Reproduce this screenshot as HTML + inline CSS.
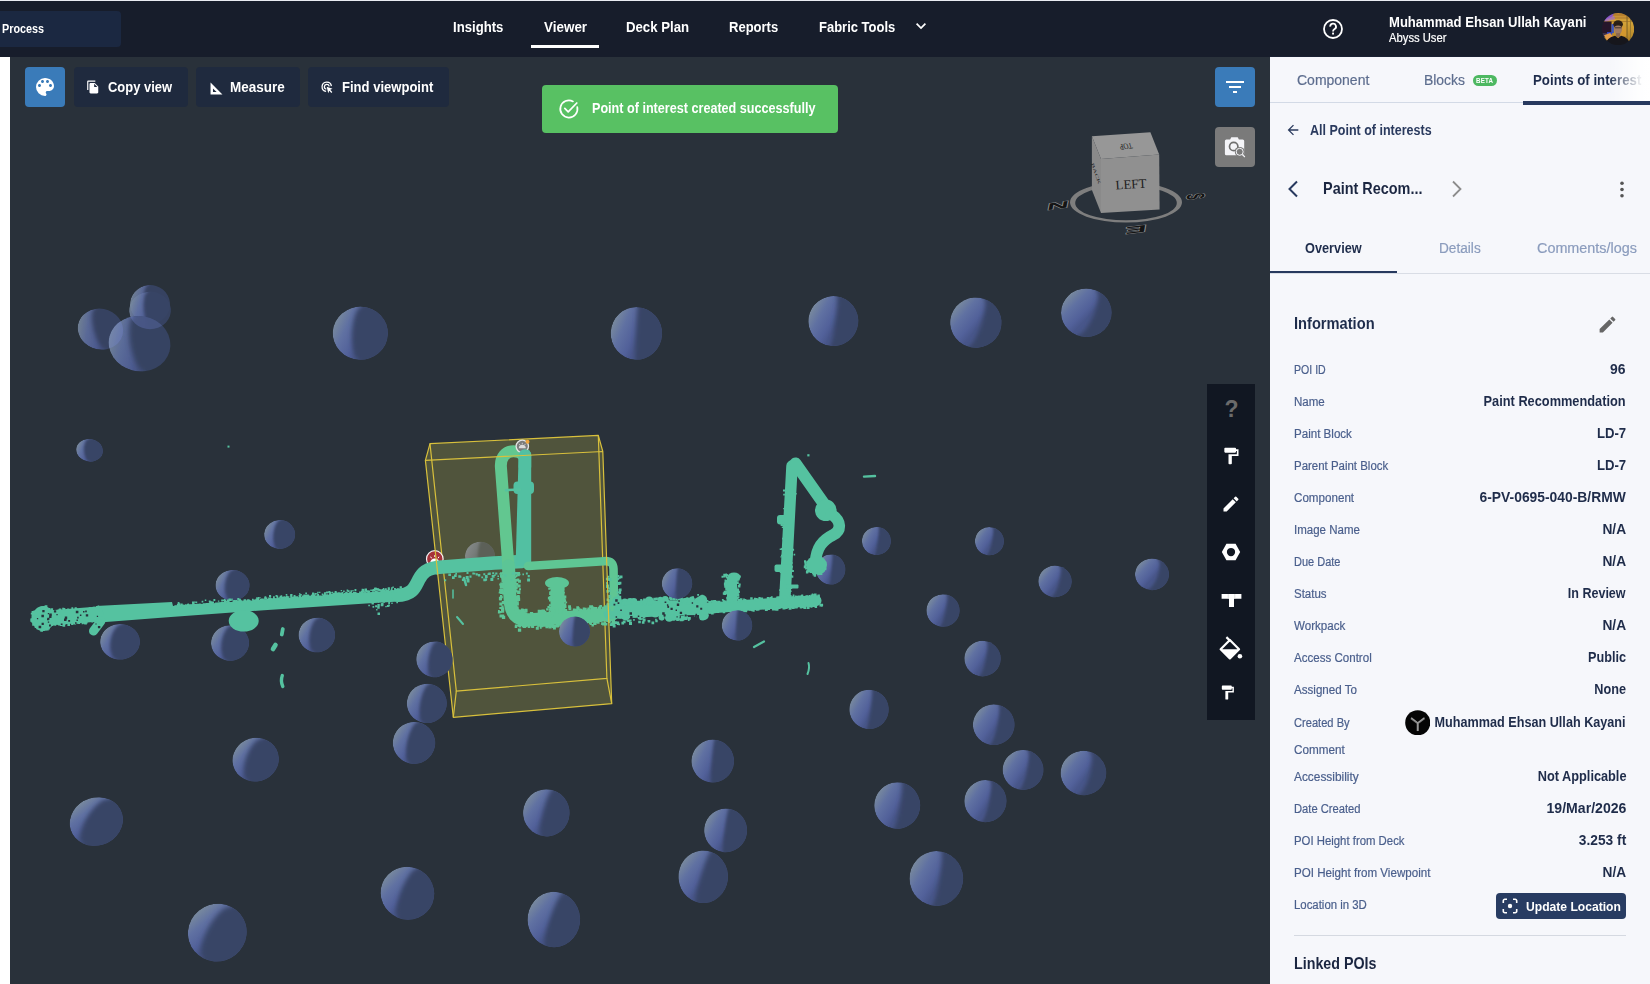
<!DOCTYPE html>
<html lang="en">
<head>
<meta charset="utf-8">
<title>Viewer - Point of interest</title>
<style>
*{box-sizing:border-box;margin:0;padding:0}
html,body{width:1650px;height:984px;overflow:hidden;background:#fff}
body{position:relative;font-family:"Liberation Sans",sans-serif;color:#fff;-webkit-font-smoothing:antialiased}
.abs{position:absolute}
.t{position:absolute;white-space:nowrap;line-height:1}
#topbar{left:0;top:0;width:1650px;height:57px;background:#171d2b;border-top:1px solid #e9ecf2}
#proc{left:0;top:11px;width:121px;height:36px;background:#1b2841;border-radius:0 4px 4px 0}
#viewer{left:10px;top:57px;width:1260px;height:927px;background:#29313a;overflow:hidden}
#panel{left:1270px;top:56px;width:380px;height:928px;background:#f6f7fb;border-top:1px solid #1a2133}
.btn{position:absolute;top:67px;height:40px;background:#1f2a3e;border-radius:4px}
.nav{font-weight:bold;font-size:15px;color:#fff;top:19px}
.lab{font-size:12px;color:#4a5f8c;left:1294px;-webkit-text-stroke:.2px #4a5f8c}
.val{font-size:14px;font-weight:bold;color:#1f2c4a;right:24px;text-align:right}
</style>
</head>
<body>
<div class="abs" id="topbar"></div>
<div class="abs" id="proc"></div>
<div class="t" id="t_proc" style="left:2px;top:22px;font-size:13px;font-weight:bold;color:#fff;left:2.4px;transform-origin:0 0;transform:scaleX(0.8321)">Process</div>
<div class="t nav" id="t_ins" style="left:453px;left:453.0px;transform-origin:0 0;transform:scaleX(0.8763)">Insights</div>
<div class="t nav" id="t_view" style="left:543px;left:543.5px;transform-origin:0 0;transform:scaleX(0.8962)">Viewer</div>
<div class="abs" style="left:531px;top:45px;width:68px;height:3px;background:#fff"></div>
<div class="t nav" id="t_deck" style="left:626px;left:626.3px;transform-origin:0 0;transform:scaleX(0.8798)">Deck Plan</div>
<div class="t nav" id="t_rep" style="left:729px;left:729.4px;transform-origin:0 0;transform:scaleX(0.8679)">Reports</div>
<div class="t nav" id="t_fab" style="left:819px;left:818.6px;transform-origin:0 0;transform:scaleX(0.8663)">Fabric Tools</div>
<svg class="abs" style="left:914px;top:19px" width="14" height="14" viewBox="0 0 14 14"><path d="M2.6 4.6 L7 9 L11.4 4.6" fill="none" stroke="#fff" stroke-width="1.7"/></svg>
<svg class="abs" style="left:1321px;top:17px" width="24" height="24" viewBox="0 0 24 24"><circle cx="12" cy="12" r="9" fill="none" stroke="#fff" stroke-width="1.8"/><path d="M9.2 9.6 a2.9 2.9 0 1 1 4.4 2.4 c-1 .7 -1.6 1.2 -1.6 2.4" fill="none" stroke="#fff" stroke-width="1.8"/><rect x="11.1" y="15.6" width="1.9" height="1.9" fill="#fff"/></svg>
<div class="t" id="t_user" style="left:1388px;top:15px;font-size:14px;font-weight:bold;color:#fff;left:1388.5px;transform-origin:0 0;transform:scaleX(0.9333)">Muhammad Ehsan Ullah Kayani</div>
<div class="t" id="t_abyss" style="-webkit-text-stroke:.2px;left:1388px;top:32px;font-size:12px;color:#fff;left:1388.5px;transform-origin:0 0;transform:scaleX(0.9371)">Abyss User</div>
<svg class="abs" style="left:1602px;top:12.800px" width="32.200" height="32.200" viewBox="0 0 32 32">
<defs><clipPath id="avc"><circle cx="16" cy="16" r="16"/></clipPath><filter id="avb" x="-10%" y="-10%" width="120%" height="120%"><feGaussianBlur stdDeviation="0.55"/></filter>
<linearGradient id="avg" x1="0" y1="0" x2="0" y2="1"><stop offset="0" stop-color="#b8782c"/><stop offset=".3" stop-color="#d6a63a"/><stop offset=".7" stop-color="#b98a2a"/><stop offset="1" stop-color="#7a5a20"/></linearGradient></defs>
<g clip-path="url(#avc)"><g filter="url(#avb)"><rect x="-3" y="-3" width="38" height="38" fill="url(#avg)"/><path d="M-3 5h38M-3 8.500h38M-3 2h38" stroke="#8a5a20" stroke-width=".9" opacity=".55"/>
<path d="M0 0h12l-2 4-8 4H0z" fill="#8a55c8"/><path d="M3 6l9-3 1 3-10 3z" fill="#a070d0" opacity=".7"/>
<rect x="0" y="8.500" width="9.500" height="12" fill="#25142a"/><rect x="0" y="20" width="10" height="4" fill="#3a3050"/>
<rect x="9.500" y="11" width="2.300" height="9" fill="#3a55c0"/><rect x="5" y="19" width="5" height="3" fill="#3048c8"/>
<path d="M2 22l6-2 3 3-6 4z" fill="#e09a48"/>
<rect x="24.300" y="3" width="1.200" height="26" fill="#8a6a28"/><rect x="27.800" y="6" width="1" height="22" fill="#9a7a30"/>
<rect x="18" y="14" width="6" height="9" fill="#d89a30" opacity=".8"/>
<ellipse cx="16" cy="11.300" rx="4.800" ry="4.200" fill="#2c2016"/>
<ellipse cx="16" cy="16.200" rx="3.900" ry="5.300" fill="#a07c62"/>
<path d="M12.300 13.600q3.700-2.400 7.400 0l0-2q-3.700-2.600-7.400 0z" fill="#2c2016"/>
<path d="M12.600 14.700h6.800" stroke="#4a3a34" stroke-width="1.100"/>
<rect x="14" y="20" width="4" height="4" fill="#8a6850"/>
<path d="M3 32q1.500-8 10-9.500l3 2.500 3-2.500q8 1.500 9 9.500z" fill="#17131a"/></g></g></svg>

<div class="abs" id="viewer"></div>
<svg class="abs" style="left:0;top:0" width="1650" height="984" viewBox="0 0 1650 984">
<defs>
<clipPath id="vclip"><rect x="10" y="56" width="1260" height="928"/></clipPath>
<clipPath id="uc"><circle r="1"/></clipPath>
<filter id="sb" x="-20%" y="-20%" width="140%" height="140%"><feGaussianBlur stdDeviation="0.085"/></filter>
<linearGradient id="lit" gradientUnits="userSpaceOnUse" x1="-1" y1="-0.35" x2="0.15" y2="0.1"><stop offset="0" stop-color="#7b8c9d"/><stop offset=".4" stop-color="#6071a2"/><stop offset=".78" stop-color="#52619a"/><stop offset="1" stop-color="#48568a"/></linearGradient>
<linearGradient id="litg" gradientUnits="userSpaceOnUse" x1="-1" y1="-0.35" x2="0.15" y2="0.1"><stop offset="0" stop-color="#868b8a"/><stop offset=".5" stop-color="#777c7a"/><stop offset="1" stop-color="#686c66"/></linearGradient>
<linearGradient id="sgg" x1="0" y1="0.3" x2="1" y2="0.7"><stop offset="0" stop-color="#7a7f80"/><stop offset=".4" stop-color="#6a6e6c"/><stop offset=".55" stop-color="#555a52"/><stop offset="1" stop-color="#54584c"/></linearGradient>
<linearGradient id="pg" gradientUnits="userSpaceOnUse" x1="495" y1="0" x2="530" y2="0"><stop offset="0" stop-color="#63c88f"/><stop offset="1" stop-color="#52c0a2"/></linearGradient>
</defs>
<g clip-path="url(#vclip)">
<g id="spheres_back">
<g transform="translate(100.4 329.2) rotate(15) scale(22.9 20.4) rotate(-27)" clip-path="url(#uc)" opacity="0.9"><circle r="1" fill="url(#lit)"/><path d="M0-1.6H1.6V1.6H0V1A0.300 1 0 0 1 0-1Z" fill="#394566" filter="url(#sb)"/></g>
<g transform="translate(150 304.3) scale(20 19.3) rotate(-5)" clip-path="url(#uc)" opacity="0.9"><circle r="1" fill="url(#lit)"/><path d="M0-1.6H1.6V1.6H0V1A0.300 1 0 0 1 0-1Z" fill="#394566" filter="url(#sb)"/></g>
<g transform="translate(150 310.4) scale(20.9 18.8) rotate(-5)" clip-path="url(#uc)" opacity="0.9"><circle r="1" fill="url(#lit)"/><path d="M0-1.6H1.6V1.6H0V1A0.300 1 0 0 1 0-1Z" fill="#394566" filter="url(#sb)"/></g>
<g transform="translate(139.5 343.7) rotate(10) scale(31 27.7) rotate(-18)" clip-path="url(#uc)" opacity="0.92"><circle r="1" fill="url(#lit)"/><path d="M0-1.6H1.6V1.6H0V1A0.300 1 0 0 1 0-1Z" fill="#394566" filter="url(#sb)"/></g>
<g transform="translate(360.3 333.2) scale(27.6 26.6) rotate(3)" clip-path="url(#uc)"><circle r="1" fill="url(#lit)"/><path d="M0-1.6H1.6V1.6H0V1A0.300 1 0 0 1 0-1Z" fill="#394566" filter="url(#sb)"/></g>
<g transform="translate(636.4 333.4) scale(25.7 26.3) rotate(3)" clip-path="url(#uc)"><circle r="1" fill="url(#lit)"/><path d="M0-1.6H1.6V1.6H0V1A0.020 1 0 0 1 0-1Z" fill="#394566" filter="url(#sb)"/></g>
<g transform="translate(833.3 321.1) scale(25 25) rotate(8)" clip-path="url(#uc)"><circle r="1" fill="url(#lit)"/><path d="M0-1.6H1.6V1.6H0V1A0.080 1 0 0 0 0-1Z" fill="#394566" filter="url(#sb)"/></g>
<g transform="translate(975.8 322.6) scale(25.7 25.2) rotate(18)" clip-path="url(#uc)"><circle r="1" fill="url(#lit)"/><path d="M0-1.6H1.6V1.6H0V1A0.220 1 0 0 0 0-1Z" fill="#394566" filter="url(#sb)"/></g>
<g transform="translate(1086.3 312.7) scale(25.3 24.3) rotate(22)" clip-path="url(#uc)"><circle r="1" fill="url(#lit)"/><path d="M0-1.6H1.6V1.6H0V1A0.300 1 0 0 0 0-1Z" fill="#394566" filter="url(#sb)"/></g>
<g transform="translate(89.5 450.3) rotate(10) scale(13.4 11.3) rotate(-10)" clip-path="url(#uc)"><circle r="1" fill="url(#lit)"/><path d="M0-1.6H1.6V1.6H0V1A0.420 1 0 0 1 0-1Z" fill="#394566" filter="url(#sb)"/></g>
<g transform="translate(279.6 534.5) scale(15.5 14.5) rotate(5)" clip-path="url(#uc)"><circle r="1" fill="url(#lit)"/><path d="M0-1.6H1.6V1.6H0V1A0.400 1 0 0 1 0-1Z" fill="#394566" filter="url(#sb)"/></g>
<g transform="translate(232.5 585.3) scale(17 15.3) rotate(5)" clip-path="url(#uc)"><circle r="1" fill="url(#lit)"/><path d="M0-1.6H1.6V1.6H0V1A0.450 1 0 0 1 0-1Z" fill="#394566" filter="url(#sb)"/></g>
<g transform="translate(120 641.8) scale(19.9 17.8) rotate(8)" clip-path="url(#uc)"><circle r="1" fill="url(#lit)"/><path d="M0-1.6H1.6V1.6H0V1A0.480 1 0 0 1 0-1Z" fill="#394566" filter="url(#sb)"/></g>
<g transform="translate(230 643) scale(19 17.8) rotate(8)" clip-path="url(#uc)"><circle r="1" fill="url(#lit)"/><path d="M0-1.6H1.6V1.6H0V1A0.450 1 0 0 1 0-1Z" fill="#394566" filter="url(#sb)"/></g>
<g transform="translate(316.8 635) scale(18.3 17.3) rotate(8)" clip-path="url(#uc)"><circle r="1" fill="url(#lit)"/><path d="M0-1.6H1.6V1.6H0V1A0.400 1 0 0 1 0-1Z" fill="#394566" filter="url(#sb)"/></g>
<g transform="translate(426.8 703.4) scale(20 19.7) rotate(10)" clip-path="url(#uc)"><circle r="1" fill="url(#lit)"/><path d="M0-1.6H1.6V1.6H0V1A0.330 1 0 0 1 0-1Z" fill="#394566" filter="url(#sb)"/></g>
<g transform="translate(414 742.9) scale(21.2 21) rotate(12)" clip-path="url(#uc)"><circle r="1" fill="url(#lit)"/><path d="M0-1.6H1.6V1.6H0V1A0.330 1 0 0 1 0-1Z" fill="#394566" filter="url(#sb)"/></g>
<g transform="translate(255.6 759.6) rotate(-15) scale(23.3 21.8) rotate(33)" clip-path="url(#uc)"><circle r="1" fill="url(#lit)"/><path d="M0-1.6H1.6V1.6H0V1A0.420 1 0 0 1 0-1Z" fill="#394566" filter="url(#sb)"/></g>
<g transform="translate(96.3 821.5) rotate(-20) scale(27 24) rotate(48)" clip-path="url(#uc)"><circle r="1" fill="url(#lit)"/><path d="M0-1.6H1.6V1.6H0V1A0.400 1 0 0 1 0-1Z" fill="#394566" filter="url(#sb)"/></g>
<g transform="translate(407.4 893.2) rotate(-60) scale(26.3 27) rotate(82)" clip-path="url(#uc)"><circle r="1" fill="url(#lit)"/><path d="M0-1.6H1.6V1.6H0V1A0.250 1 0 0 1 0-1Z" fill="#394566" filter="url(#sb)"/></g>
<g transform="translate(217.3 932.6) rotate(-30) scale(29.6 28.7) rotate(58)" clip-path="url(#uc)"><circle r="1" fill="url(#lit)"/><path d="M0-1.6H1.6V1.6H0V1A0.350 1 0 0 1 0-1Z" fill="#394566" filter="url(#sb)"/></g>
<g transform="translate(869 709.4) scale(19.7 19.7) rotate(8)" clip-path="url(#uc)"><circle r="1" fill="url(#lit)"/><path d="M0-1.6H1.6V1.6H0V1A0.080 1 0 0 0 0-1Z" fill="#394566" filter="url(#sb)"/></g>
<g transform="translate(712.7 761.1) scale(21.3 21.5) rotate(5)" clip-path="url(#uc)"><circle r="1" fill="url(#lit)"/><path d="M0-1.6H1.6V1.6H0V1A0.050 1 0 0 1 0-1Z" fill="#394566" filter="url(#sb)"/></g>
<g transform="translate(546.3 812.8) scale(23.3 23.6) rotate(15)" clip-path="url(#uc)"><circle r="1" fill="url(#lit)"/><path d="M0-1.6H1.6V1.6H0V1A0.150 1 0 0 1 0-1Z" fill="#394566" filter="url(#sb)"/></g>
<g transform="translate(725.6 830.4) scale(21.5 21.8) rotate(8)" clip-path="url(#uc)"><circle r="1" fill="url(#lit)"/><path d="M0-1.6H1.6V1.6H0V1A0.050 1 0 0 1 0-1Z" fill="#394566" filter="url(#sb)"/></g>
<g transform="translate(703.2 876.7) scale(24.8 26.3) rotate(18)" clip-path="url(#uc)"><circle r="1" fill="url(#lit)"/><path d="M0-1.6H1.6V1.6H0V1A0.100 1 0 0 1 0-1Z" fill="#394566" filter="url(#sb)"/></g>
<g transform="translate(553.8 919.5) scale(26.3 27.8) rotate(20)" clip-path="url(#uc)"><circle r="1" fill="url(#lit)"/><path d="M0-1.6H1.6V1.6H0V1A0.150 1 0 0 1 0-1Z" fill="#394566" filter="url(#sb)"/></g>
<g transform="translate(897.2 805.5) scale(23 23.3) rotate(10)" clip-path="url(#uc)"><circle r="1" fill="url(#lit)"/><path d="M0-1.6H1.6V1.6H0V1A0.120 1 0 0 0 0-1Z" fill="#394566" filter="url(#sb)"/></g>
<g transform="translate(936.3 878.5) scale(26.8 27.4) rotate(10)" clip-path="url(#uc)"><circle r="1" fill="url(#lit)"/><path d="M0-1.6H1.6V1.6H0V1A0.120 1 0 0 0 0-1Z" fill="#394566" filter="url(#sb)"/></g>
<g transform="translate(985.4 801.1) scale(21.1 21.1) rotate(12)" clip-path="url(#uc)"><circle r="1" fill="url(#lit)"/><path d="M0-1.6H1.6V1.6H0V1A0.180 1 0 0 0 0-1Z" fill="#394566" filter="url(#sb)"/></g>
<g transform="translate(1023 769.9) scale(20.4 20) rotate(12)" clip-path="url(#uc)"><circle r="1" fill="url(#lit)"/><path d="M0-1.6H1.6V1.6H0V1A0.200 1 0 0 0 0-1Z" fill="#394566" filter="url(#sb)"/></g>
<g transform="translate(1083.4 773) scale(22.8 22.2) rotate(15)" clip-path="url(#uc)"><circle r="1" fill="url(#lit)"/><path d="M0-1.6H1.6V1.6H0V1A0.280 1 0 0 0 0-1Z" fill="#394566" filter="url(#sb)"/></g>
<g transform="translate(993.7 724.7) scale(20.8 20.4) rotate(12)" clip-path="url(#uc)"><circle r="1" fill="url(#lit)"/><path d="M0-1.6H1.6V1.6H0V1A0.180 1 0 0 0 0-1Z" fill="#394566" filter="url(#sb)"/></g>
<g transform="translate(982.5 658.6) scale(18.2 17.8) rotate(12)" clip-path="url(#uc)"><circle r="1" fill="url(#lit)"/><path d="M0-1.6H1.6V1.6H0V1A0.180 1 0 0 0 0-1Z" fill="#394566" filter="url(#sb)"/></g>
<g transform="translate(943 610.5) scale(16.6 16.3) rotate(12)" clip-path="url(#uc)"><circle r="1" fill="url(#lit)"/><path d="M0-1.6H1.6V1.6H0V1A0.150 1 0 0 0 0-1Z" fill="#394566" filter="url(#sb)"/></g>
<g transform="translate(1055 581.4) scale(16.7 15.8) rotate(15)" clip-path="url(#uc)"><circle r="1" fill="url(#lit)"/><path d="M0-1.6H1.6V1.6H0V1A0.250 1 0 0 0 0-1Z" fill="#394566" filter="url(#sb)"/></g>
<g transform="translate(1152 574.3) scale(17 15.8) rotate(18)" clip-path="url(#uc)"><circle r="1" fill="url(#lit)"/><path d="M0-1.6H1.6V1.6H0V1A0.350 1 0 0 0 0-1Z" fill="#394566" filter="url(#sb)"/></g>
<g transform="translate(989.4 541.2) scale(14.5 14.1) rotate(12)" clip-path="url(#uc)"><circle r="1" fill="url(#lit)"/><path d="M0-1.6H1.6V1.6H0V1A0.180 1 0 0 0 0-1Z" fill="#394566" filter="url(#sb)"/></g>
<g transform="translate(876.4 541) scale(14.5 14.1) rotate(8)" clip-path="url(#uc)"><circle r="1" fill="url(#lit)"/><path d="M0-1.6H1.6V1.6H0V1A0.100 1 0 0 0 0-1Z" fill="#394566" filter="url(#sb)"/></g>
<g transform="translate(830.6 569.5) scale(14.7 15) rotate(6)" clip-path="url(#uc)"><circle r="1" fill="url(#lit)"/><path d="M0-1.6H1.6V1.6H0V1A0.060 1 0 0 0 0-1Z" fill="#394566" filter="url(#sb)"/></g>
<clipPath id="cA"><ellipse cx="100.4" cy="329.2" rx="22.9" ry="20.4" transform="rotate(15 100.4 329.2)"/></clipPath>
<clipPath id="cB"><ellipse cx="150" cy="310.4" rx="20.9" ry="18.8"/></clipPath>
<clipPath id="cB0"><ellipse cx="150" cy="302" rx="20" ry="19.5"/></clipPath>
<g fill="#7f93e8" fill-opacity=".22"><g clip-path="url(#cA)"><ellipse cx="139.5" cy="343.7" rx="31" ry="27.7" transform="rotate(10 139.5 343.7)"/></g><g clip-path="url(#cB)"><ellipse cx="139.5" cy="343.7" rx="31" ry="27.7" transform="rotate(10 139.5 343.7)"/></g></g>
</g>
<g id="box">
<polygon points="430,443.7 598.3,435.4 602.8,451.5 611.7,703.7 453.3,717.3 425.4,460.4" fill="#50543c"/>
<g transform="translate(480 556.3) scale(15 14.5) rotate(3)" clip-path="url(#uc)"><circle r="1" fill="url(#litg)"/><path d="M0-1.6H1.6V1.6H0V1A0.150 1 0 0 1 0-1Z" fill="#5c6058" filter="url(#sb)"/></g>
<g fill="none" stroke="#d8c03c" stroke-width="1.2" stroke-linejoin="round">
<polygon points="430,443.7 598.3,435.4 606.9,678.4 456.3,691.1"/>
<path d="M430 443.7L425.4 460.4M598.3 435.4L602.8 451.5M606.9 678.4L611.7 703.7M456.3 691.1L453.3 717.3"/>
</g></g>
<g id="marker_red">
<circle cx="434.8" cy="559" r="8.3" fill="#a6323a" stroke="#f4f4f4" stroke-width="1.2"/>
<path d="M430.2 563.1 a4.6 4.6 0 0 1 9.2 0z" fill="#fff"/>
<path d="M430.6 556.7l1 1.6M434.8 555.1l0 1.9M439 556.7l-1 1.6" stroke="#fff" stroke-width="1" fill="none"/>
</g>

<g id="pipes" fill="#55c2a0" stroke="#55c2a0" stroke-linecap="round" stroke-linejoin="round">
<polygon points="96,606 172,602 173,606 397,590.2 403,589.5 403,601.2 366,603.6 264,610.2 171,617 96,622.7" stroke="none"/>
<path d="M42 618.5 L96 614.2" fill="none" stroke-width="15"/>
<ellipse cx="43" cy="618.5" rx="11" ry="12.5" stroke="none"/>
<path d="M101 621 L93.5 631" fill="none" stroke-width="9"/>
<ellipse cx="243.7" cy="620.8" rx="15" ry="10.8" stroke="none"/>
<path d="M398 595.3 C424 594.5 411 571 436 567.6 L494 563 L522 561.5" fill="none" stroke-width="13.5"/>
<polygon points="518.6,455 531.2,455 531.2,566 515.6,566" stroke="none" fill="#52c0a2"/>
<circle cx="524.9" cy="455" r="6.3" stroke="none" fill="#52c0a2"/>
<path d="M508.4 566 L500.9 467 C500.3 457 506 451.2 513.5 451.3 C518.5 451.4 522 453 524 456.5" fill="none" stroke="#62c790" stroke-width="12"/>
<rect x="513.5" y="481.5" width="20.5" height="12.5" rx="4" stroke="none" fill="#52c0a2"/>
<path d="M506 490.2 L520 489.6" fill="none" stroke-width="2.5"/>
<path d="M508.5 566 L510 598 C510.5 614 516 620.3 530 619.8 L612 614.5" fill="none" stroke="#5cc596" stroke-width="13"/>
<ellipse cx="557" cy="583" rx="12" ry="6" stroke="none" fill="#5cc596"/>
<rect x="550.5" y="584" width="14" height="31" stroke="none" fill="#5cc596"/>
<path d="M528 566 L604 561.2 C611 560.8 613.3 563 613.5 569 L614 606" fill="none" stroke="#5fc694" stroke-width="8.6"/>
<path d="M609 613.5 L676 610 L709 608 L774.5 603.3 L816 600.7" fill="none" stroke-width="11"/>
<path d="M614 608.5 L700 607.5" fill="none" stroke-width="15"/>
<g stroke="none"><circle cx="669.3" cy="617.3" r="4.5"/><circle cx="680.1" cy="600.6" r="2.6"/><circle cx="698.8" cy="602.0" r="4.8"/><circle cx="655.2" cy="613.9" r="3.5"/><circle cx="634.9" cy="614.2" r="3.5"/><circle cx="691.8" cy="599.3" r="2.9"/><circle cx="624.8" cy="602.0" r="3.6"/><circle cx="701.5" cy="601.6" r="3.0"/><circle cx="702.4" cy="617.3" r="3.2"/><circle cx="661.6" cy="617.4" r="3.0"/><circle cx="630.1" cy="601.1" r="3.2"/><circle cx="627.3" cy="614.8" r="3.2"/><circle cx="687.2" cy="599.8" r="2.5"/><circle cx="643.1" cy="614.7" r="3.4"/><circle cx="676.1" cy="616.3" r="3.7"/><circle cx="617.2" cy="601.1" r="4.9"/><circle cx="649.2" cy="601.0" r="4.5"/><circle cx="665.2" cy="599.7" r="3.6"/><circle cx="669.4" cy="614.5" r="2.8"/><circle cx="687.4" cy="601.1" r="3.4"/><circle cx="660.3" cy="599.5" r="2.8"/><circle cx="685.3" cy="617.3" r="2.6"/><circle cx="620.4" cy="615.0" r="3.8"/><circle cx="625.6" cy="615.7" r="4.8"/><circle cx="640.7" cy="616.7" r="3.3"/><circle cx="669.7" cy="614.1" r="5.0"/><circle cx="616.5" cy="600.9" r="3.8"/><circle cx="633.8" cy="601.5" r="3.4"/><circle cx="671.9" cy="617.2" r="2.6"/><circle cx="615.0" cy="601.7" r="3.3"/><circle cx="702.3" cy="600.0" r="4.9"/><circle cx="684.5" cy="601.0" r="2.9"/><circle cx="617.4" cy="600.7" r="3.2"/><circle cx="703.9" cy="615.3" r="4.9"/></g>
<rect x="727" y="578" width="10" height="26" stroke="none"/>
<ellipse cx="734" cy="577" rx="6.5" ry="4.5" stroke="none"/>
<path d="M792 466 L785 596" fill="none" stroke-width="11.5"/>
<rect x="777" y="515" width="17" height="9.5" rx="3" stroke="none"/>
<rect x="774.5" y="564.5" width="18" height="7.5" rx="2" stroke="none"/>
<rect x="786" y="584.5" width="12.5" height="4" rx="1" stroke="none"/>
<path d="M795.5 463.5 L826.5 507.5" fill="none" stroke-width="12"/>
<circle cx="825.8" cy="510.3" r="10.8" stroke="none"/>
<path d="M831 514 C842 521 841.5 531 833 535 C822 540.5 816.5 548 815.5 562" fill="none" stroke-width="11.5"/>
<ellipse cx="816.5" cy="565" rx="10.5" ry="9.3" stroke="none"/>
<path d="M283.3 596.3h1.6v1.6h-1.6zM264.1 597.3h2.5v2.5h-2.5zM390.8 588.8h1.7v1.7h-1.7zM192.3 603.7h2.3v2.3h-2.3zM255.4 599.6h2.2v2.2h-2.2zM330.4 594.0h1.7v1.7h-1.7zM332.6 592.9h2.2v2.2h-2.2zM329.5 594.6h2.1v2.1h-2.1zM304.4 595.1h1.6v1.6h-1.6zM325.1 594.5h2.1v2.1h-2.1zM353.9 591.9h2.2v2.2h-2.2zM360.8 592.1h2.3v2.3h-2.3zM329.9 594.4h2.4v2.4h-2.4zM290.1 594.5h2.3v2.3h-2.3zM385.7 589.9h2.2v2.2h-2.2zM338.5 593.5h2.0v2.0h-2.0zM323.7 594.0h2.2v2.2h-2.2zM317.2 591.8h1.5v1.5h-1.5zM273.6 598.4h1.6v1.6h-1.6zM328.4 591.1h1.9v1.9h-1.9zM223.6 599.0h1.7v1.7h-1.7zM213.4 599.1h1.9v1.9h-1.9zM259.7 599.3h2.0v2.0h-2.0zM227.2 601.6h1.3v1.3h-1.3zM264.4 597.4h1.4v1.4h-1.4zM361.6 588.7h2.0v2.0h-2.0zM194.6 603.9h1.7v1.7h-1.7zM305.4 596.1h2.3v2.3h-2.3zM268.6 598.7h2.1v2.1h-2.1zM256.2 598.6h2.0v2.0h-2.0zM391.2 590.1h2.0v2.0h-2.0zM253.1 599.8h1.3v1.3h-1.3zM197.6 603.7h2.0v2.0h-2.0zM205.1 603.2h2.4v2.4h-2.4zM257.7 597.1h1.6v1.6h-1.6zM393.7 590.1h2.4v2.4h-2.4zM307.8 596.2h1.9v1.9h-1.9zM266.7 599.1h1.9v1.9h-1.9zM237.3 598.0h2.0v2.0h-2.0zM273.1 598.1h2.3v2.3h-2.3zM176.0 605.2h1.6v1.6h-1.6zM385.2 588.2h1.6v1.6h-1.6zM208.3 603.0h1.7v1.7h-1.7zM310.6 595.0h2.0v2.0h-2.0zM341.5 593.2h1.7v1.7h-1.7zM293.6 594.9h1.9v1.9h-1.9zM277.9 597.6h2.0v2.0h-2.0zM180.3 603.5h2.4v2.4h-2.4zM374.5 587.6h2.2v2.2h-2.2zM269.5 598.1h2.1v2.1h-2.1zM282.9 597.7h1.8v1.8h-1.8zM262.3 599.2h1.5v1.5h-1.5zM240.6 600.7h1.4v1.4h-1.4zM362.7 590.6h1.6v1.6h-1.6zM351.0 592.9h1.5v1.5h-1.5zM281.1 596.5h1.7v1.7h-1.7zM208.0 603.0h2.3v2.3h-2.3zM187.6 604.2h2.3v2.3h-2.3zM323.3 594.4h2.5v2.5h-2.5zM399.6 586.2h2.3v2.3h-2.3zM223.0 601.9h2.4v2.4h-2.4zM334.4 592.0h2.4v2.4h-2.4zM207.1 603.0h1.8v1.8h-1.8zM209.7 602.8h1.4v1.4h-1.4zM197.7 603.7h1.4v1.4h-1.4zM186.1 604.5h2.2v2.2h-2.2zM372.3 589.9h1.7v1.7h-1.7zM308.8 596.0h1.7v1.7h-1.7zM185.7 604.5h1.5v1.5h-1.5zM315.9 595.5h2.0v2.0h-2.0zM313.6 594.5h1.6v1.6h-1.6zM343.1 590.6h1.6v1.6h-1.6zM257.6 599.5h1.5v1.5h-1.5zM334.6 591.0h2.1v2.1h-2.1zM192.8 603.1h1.6v1.6h-1.6zM371.9 589.5h2.3v2.3h-2.3zM179.7 605.0h1.4v1.4h-1.4zM207.4 603.0h2.1v2.1h-2.1zM222.9 602.2h2.1v2.1h-2.1zM359.1 591.5h1.7v1.7h-1.7zM225.6 600.9h1.7v1.7h-1.7zM260.0 599.1h2.1v2.1h-2.1zM355.4 592.5h1.9v1.9h-1.9zM307.1 595.5h1.8v1.8h-1.8zM194.1 601.4h1.3v1.3h-1.3zM374.8 590.9h1.3v1.3h-1.3zM280.2 597.9h2.0v2.0h-2.0zM269.7 595.6h1.5v1.5h-1.5zM209.3 602.9h1.8v1.8h-1.8zM372.7 589.1h1.6v1.6h-1.6zM208.8 600.6h1.9v1.9h-1.9zM180.3 604.9h1.7v1.7h-1.7zM385.9 589.8h1.9v1.9h-1.9zM387.6 589.7h1.6v1.6h-1.6zM325.8 592.0h1.5v1.5h-1.5zM177.7 601.9h1.8v1.8h-1.8zM394.0 587.9h1.9v1.9h-1.9zM237.6 600.9h2.2v2.2h-2.2zM209.2 602.2h2.4v2.4h-2.4zM319.3 595.4h1.3v1.3h-1.3zM186.9 604.5h1.8v1.8h-1.8zM183.2 604.7h2.5v2.5h-2.5zM290.3 594.1h1.4v1.4h-1.4zM376.9 591.2h1.4v1.4h-1.4zM227.5 599.9h1.4v1.4h-1.4zM230.2 599.4h1.4v1.4h-1.4zM181.6 604.8h1.5v1.5h-1.5zM288.0 596.2h1.4v1.4h-1.4zM243.6 599.3h2.4v2.4h-2.4zM309.4 595.9h1.6v1.6h-1.6zM177.0 605.2h1.9v1.9h-1.9zM302.3 595.5h2.2v2.2h-2.2zM380.2 589.4h2.3v2.3h-2.3zM223.1 599.9h1.4v1.4h-1.4zM349.1 593.1h1.7v1.7h-1.7zM201.6 601.1h1.4v1.4h-1.4zM269.7 596.3h1.4v1.4h-1.4zM331.7 591.8h1.6v1.6h-1.6zM257.2 597.9h1.7v1.7h-1.7zM343.5 593.5h2.1v2.1h-2.1zM345.2 591.8h2.3v2.3h-2.3zM322.4 594.9h2.2v2.2h-2.2zM331.9 594.0h1.8v1.8h-1.8zM201.7 600.8h1.6v1.6h-1.6zM326.1 591.4h2.2v2.2h-2.2zM299.0 593.2h1.5v1.5h-1.5zM254.4 599.7h2.4v2.4h-2.4zM311.5 594.2h1.7v1.7h-1.7zM247.3 599.2h2.3v2.3h-2.3zM337.7 592.7h1.5v1.5h-1.5zM333.8 594.3h2.3v2.3h-2.3zM199.0 603.7h1.9v1.9h-1.9zM271.0 598.2h2.4v2.4h-2.4zM294.4 596.9h2.0v2.0h-2.0zM196.6 603.8h1.8v1.8h-1.8zM184.9 604.6h1.3v1.3h-1.3zM303.6 596.2h1.8v1.8h-1.8zM221.2 599.5h2.0v2.0h-2.0zM254.4 599.7h1.6v1.6h-1.6zM252.2 600.1h2.3v2.3h-2.3zM365.8 590.2h1.5v1.5h-1.5zM361.6 588.7h1.5v1.5h-1.5zM195.5 603.8h2.4v2.4h-2.4zM218.4 602.2h1.7v1.7h-1.7zM328.7 594.5h2.0v2.0h-2.0zM354.5 589.0h1.9v1.9h-1.9zM305.8 594.4h1.7v1.7h-1.7zM178.2 603.3h1.9v1.9h-1.9zM332.4 594.5h2.3v2.3h-2.3zM382.6 590.0h1.9v1.9h-1.9zM354.1 591.8h2.1v2.1h-2.1zM291.1 594.0h1.4v1.4h-1.4zM253.1 599.4h2.2v2.2h-2.2zM242.9 600.5h1.6v1.6h-1.6zM335.3 593.6h2.1v2.1h-2.1zM391.2 590.1h2.1v2.1h-2.1zM363.1 591.2h1.6v1.6h-1.6zM290.8 597.2h1.6v1.6h-1.6zM394.2 588.2h1.3v1.3h-1.3zM261.0 598.5h2.4v2.4h-2.4zM379.5 589.2h1.4v1.4h-1.4zM329.0 593.9h1.7v1.7h-1.7zM374.2 589.3h1.6v1.6h-1.6zM314.9 595.5h1.5v1.5h-1.5zM316.3 593.0h1.4v1.4h-1.4zM302.0 596.4h2.4v2.4h-2.4zM338.0 592.3h1.9v1.9h-1.9zM378.3 588.9h2.0v2.0h-2.0zM392.4 586.5h1.4v1.4h-1.4zM300.3 593.9h1.5v1.5h-1.5zM307.6 595.4h2.2v2.2h-2.2zM187.0 604.4h2.3v2.3h-2.3zM390.2 590.1h2.1v2.1h-2.1zM383.3 590.1h2.3v2.3h-2.3zM280.7 595.3h1.5v1.5h-1.5zM193.2 603.1h1.4v1.4h-1.4zM344.8 593.1h2.3v2.3h-2.3zM335.6 594.0h2.4v2.4h-2.4zM315.5 595.4h1.4v1.4h-1.4zM195.5 601.4h1.7v1.7h-1.7zM277.6 598.1h2.2v2.2h-2.2zM192.1 604.1h2.0v2.0h-2.0zM257.5 598.6h1.7v1.7h-1.7zM327.9 594.8h2.4v2.4h-2.4zM189.5 604.3h2.2v2.2h-2.2zM239.5 599.4h1.7v1.7h-1.7zM341.1 593.6h1.8v1.8h-1.8zM238.3 600.2h2.2v2.2h-2.2zM303.3 594.4h2.3v2.3h-2.3zM290.4 595.6h1.6v1.6h-1.6zM323.9 592.6h1.4v1.4h-1.4zM281.9 597.8h1.9v1.9h-1.9zM261.1 599.2h1.4v1.4h-1.4zM254.1 599.7h1.3v1.3h-1.3zM346.6 589.6h1.6v1.6h-1.6zM276.5 596.9h1.4v1.4h-1.4zM222.8 601.9h1.8v1.8h-1.8zM279.6 595.8h2.4v2.4h-2.4zM328.7 591.2h1.8v1.8h-1.8zM349.5 592.1h2.4v2.4h-2.4zM319.1 591.7h1.3v1.3h-1.3zM347.5 593.1h2.3v2.3h-2.3zM380.7 591.2h2.2v2.2h-2.2zM375.3 590.9h1.8v1.8h-1.8zM394.6 589.9h1.6v1.6h-1.6zM268.1 597.4h1.6v1.6h-1.6zM324.0 592.2h1.8v1.8h-1.8zM189.9 604.2h2.4v2.4h-2.4zM373.9 587.7h2.3v2.3h-2.3zM391.1 587.3h1.6v1.6h-1.6zM382.8 590.7h1.3v1.3h-1.3zM215.1 602.5h1.6v1.6h-1.6zM343.9 593.1h1.5v1.5h-1.5zM291.2 597.1h2.1v2.1h-2.1zM192.5 603.3h1.7v1.7h-1.7zM256.1 598.6h2.5v2.5h-2.5zM226.9 599.4h2.0v2.0h-2.0zM338.8 592.4h2.1v2.1h-2.1zM174.9 605.3h1.8v1.8h-1.8zM286.9 597.1h1.4v1.4h-1.4zM286.1 595.8h1.7v1.7h-1.7zM176.9 603.7h2.1v2.1h-2.1zM382.9 589.5h2.2v2.2h-2.2zM386.7 590.4h2.5v2.5h-2.5zM240.8 600.8h1.4v1.4h-1.4zM275.3 598.2h1.9v1.9h-1.9zM261.6 599.2h1.7v1.7h-1.7zM298.8 596.6h1.5v1.5h-1.5zM252.0 598.8h1.5v1.5h-1.5zM275.5 595.1h1.7v1.7h-1.7zM205.8 603.1h1.6v1.6h-1.6zM235.9 601.0h2.2v2.2h-2.2zM232.8 601.2h2.1v2.1h-2.1zM261.6 599.2h1.6v1.6h-1.6zM233.1 601.2h1.8v1.8h-1.8zM376.6 588.3h1.4v1.4h-1.4zM340.7 589.9h1.4v1.4h-1.4zM359.9 592.3h1.3v1.3h-1.3zM306.3 595.5h2.0v2.0h-2.0zM311.5 595.9h1.4v1.4h-1.4zM187.6 604.4h1.4v1.4h-1.4zM188.2 604.4h2.1v2.1h-2.1zM375.4 588.0h2.1v2.1h-2.1zM364.3 591.6h1.6v1.6h-1.6zM240.1 600.3h1.9v1.9h-1.9zM377.6 588.3h1.6v1.6h-1.6zM233.0 601.2h1.5v1.5h-1.5zM193.1 604.0h1.4v1.4h-1.4zM269.9 598.6h2.1v2.1h-2.1zM211.9 601.4h2.1v2.1h-2.1zM274.0 598.4h1.5v1.5h-1.5zM233.1 600.1h2.4v2.4h-2.4zM298.6 595.0h2.2v2.2h-2.2zM362.6 589.1h1.6v1.6h-1.6zM254.5 599.7h1.6v1.6h-1.6zM315.5 595.6h1.4v1.4h-1.4zM347.5 590.2h2.1v2.1h-2.1zM364.5 588.6h2.5v2.5h-2.5zM260.6 599.3h2.2v2.2h-2.2zM231.4 599.4h1.4v1.4h-1.4zM187.7 604.4h1.8v1.8h-1.8zM370.3 589.5h1.5v1.5h-1.5zM387.1 590.4h1.9v1.9h-1.9zM196.8 603.8h1.6v1.6h-1.6zM179.1 605.0h1.6v1.6h-1.6zM197.6 603.7h2.4v2.4h-2.4zM387.7 587.3h2.2v2.2h-2.2zM199.2 603.6h1.4v1.4h-1.4zM397.1 588.2h1.6v1.6h-1.6zM298.6 596.6h1.8v1.8h-1.8zM220.7 602.1h2.4v2.4h-2.4zM260.0 599.3h2.4v2.4h-2.4zM247.3 600.2h1.9v1.9h-1.9zM203.8 603.4h1.9v1.9h-1.9zM274.0 598.3h2.0v2.0h-2.0zM286.0 597.0h1.6v1.6h-1.6zM279.3 597.1h1.5v1.5h-1.5zM219.2 602.2h2.2v2.2h-2.2zM196.4 603.8h1.5v1.5h-1.5zM210.2 601.3h2.0v2.0h-2.0zM367.5 591.2h1.4v1.4h-1.4zM304.3 594.4h1.4v1.4h-1.4zM336.3 593.6h1.7v1.7h-1.7zM306.9 594.7h2.3v2.3h-2.3zM381.6 588.9h2.4v2.4h-2.4zM203.3 603.3h1.8v1.8h-1.8zM394.6 589.1h2.2v2.2h-2.2zM338.1 594.0h1.7v1.7h-1.7zM366.5 590.3h2.3v2.3h-2.3zM326.1 594.2h1.9v1.9h-1.9zM334.2 593.8h1.5v1.5h-1.5zM284.8 597.3h2.2v2.2h-2.2zM362.9 590.9h1.9v1.9h-1.9zM199.2 603.8h2.3v2.3h-2.3zM227.3 601.6h2.1v2.1h-2.1zM260.8 599.3h1.6v1.6h-1.6zM234.4 600.4h2.0v2.0h-2.0zM341.5 592.1h1.7v1.7h-1.7zM339.7 592.8h2.2v2.2h-2.2zM274.4 598.3h1.4v1.4h-1.4zM232.4 601.3h1.5v1.5h-1.5zM185.0 604.2h1.4v1.4h-1.4zM276.4 597.9h1.9v1.9h-1.9zM291.0 596.9h2.2v2.2h-2.2zM315.2 595.4h2.0v2.0h-2.0zM336.3 594.0h2.0v2.0h-2.0zM177.6 605.1h2.5v2.5h-2.5zM217.9 600.4h1.4v1.4h-1.4zM256.2 597.2h1.3v1.3h-1.3zM269.7 598.1h1.8v1.8h-1.8zM210.9 602.8h2.4v2.4h-2.4zM329.1 592.8h1.8v1.8h-1.8zM265.2 597.5h2.2v2.2h-2.2zM331.1 594.3h2.1v2.1h-2.1zM346.9 593.2h2.4v2.4h-2.4zM352.8 592.1h2.1v2.1h-2.1zM373.3 589.9h1.5v1.5h-1.5zM246.7 599.6h2.2v2.2h-2.2zM216.8 602.4h2.3v2.3h-2.3zM255.4 598.7h1.7v1.7h-1.7zM204.8 599.5h1.5v1.5h-1.5zM269.0 594.9h2.0v2.0h-2.0zM391.4 590.1h1.7v1.7h-1.7zM382.8 587.9h1.3v1.3h-1.3zM186.3 604.5h2.2v2.2h-2.2zM281.9 597.8h1.8v1.8h-1.8zM381.5 589.6h1.5v1.5h-1.5zM269.2 598.5h1.6v1.6h-1.6zM240.2 600.7h1.4v1.4h-1.4zM294.4 596.2h2.0v2.0h-2.0zM194.5 603.9h1.8v1.8h-1.8zM246.1 600.3h2.2v2.2h-2.2zM243.6 600.5h1.4v1.4h-1.4zM290.3 596.4h2.4v2.4h-2.4zM317.1 594.1h1.9v1.9h-1.9zM273.0 596.3h1.8v1.8h-1.8zM189.2 604.3h1.6v1.6h-1.6zM238.2 598.8h2.4v2.4h-2.4zM238.5 599.0h2.4v2.4h-2.4zM192.0 601.6h2.1v2.1h-2.1zM277.2 598.0h1.7v1.7h-1.7zM328.4 594.5h1.4v1.4h-1.4zM224.0 599.6h2.3v2.3h-2.3zM286.6 596.2h2.3v2.3h-2.3zM301.9 595.6h2.0v2.0h-2.0zM264.5 596.2h1.8v1.8h-1.8zM372.4 589.6h2.0v2.0h-2.0zM306.6 594.6h2.2v2.2h-2.2zM181.4 604.4h2.4v2.4h-2.4zM187.4 603.6h1.6v1.6h-1.6zM321.7 593.5h1.5v1.5h-1.5zM248.7 600.1h1.9v1.9h-1.9zM367.6 591.8h2.0v2.0h-2.0zM365.2 590.6h1.7v1.7h-1.7zM314.5 595.5h1.7v1.7h-1.7zM351.7 592.9h2.4v2.4h-2.4zM262.0 599.2h2.5v2.5h-2.5zM202.7 603.3h2.2v2.2h-2.2zM276.4 595.5h1.8v1.8h-1.8zM384.5 588.3h2.0v2.0h-2.0zM272.7 598.4h1.8v1.8h-1.8zM237.3 600.7h2.1v2.1h-2.1zM227.6 600.6h1.9v1.9h-1.9zM377.4 589.0h1.7v1.7h-1.7zM311.5 595.8h1.4v1.4h-1.4zM285.9 596.3h1.4v1.4h-1.4zM224.1 601.8h2.2v2.2h-2.2zM223.4 601.9h1.3v1.3h-1.3zM199.8 603.8h1.7v1.7h-1.7zM228.5 598.6h2.5v2.5h-2.5zM341.8 593.6h2.3v2.3h-2.3zM350.4 590.3h1.6v1.6h-1.6zM186.9 603.9h1.9v1.9h-1.9zM174.4 605.2h2.3v2.3h-2.3zM338.3 593.9h2.0v2.0h-2.0zM259.4 597.2h1.3v1.3h-1.3zM231.3 598.4h1.4v1.4h-1.4zM228.4 601.7h1.9v1.9h-1.9zM362.8 591.1h1.7v1.7h-1.7zM261.5 598.4h2.3v2.3h-2.3zM352.3 590.1h1.3v1.3h-1.3zM305.3 592.4h1.7v1.7h-1.7zM224.1 601.1h2.0v2.0h-2.0zM237.2 600.9h1.5v1.5h-1.5zM382.0 589.8h2.1v2.1h-2.1zM339.0 593.7h2.1v2.1h-2.1zM329.5 591.9h1.9v1.9h-1.9zM296.3 596.3h1.7v1.7h-1.7zM280.3 597.7h1.7v1.7h-1.7zM299.6 595.8h1.7v1.7h-1.7zM235.6 600.1h2.1v2.1h-2.1zM203.5 603.3h2.0v2.0h-2.0zM216.4 602.5h1.3v1.3h-1.3zM285.7 594.0h1.6v1.6h-1.6zM209.8 602.8h2.4v2.4h-2.4zM191.1 604.2h2.1v2.1h-2.1zM314.5 593.1h1.6v1.6h-1.6zM376.1 588.9h1.9v1.9h-1.9zM282.6 597.0h2.2v2.2h-2.2zM280.8 597.5h2.4v2.4h-2.4zM311.7 594.4h2.1v2.1h-2.1zM248.4 600.1h1.7v1.7h-1.7zM312.5 594.9h2.4v2.4h-2.4zM333.4 593.6h1.6v1.6h-1.6zM312.0 592.4h2.2v2.2h-2.2zM224.7 601.8h1.9v1.9h-1.9zM336.7 592.5h2.4v2.4h-2.4zM273.0 598.7h1.7v1.7h-1.7zM335.8 594.0h1.4v1.4h-1.4zM349.2 591.9h2.2v2.2h-2.2zM368.1 590.4h2.0v2.0h-2.0zM332.3 594.2h2.3v2.3h-2.3zM360.9 590.7h2.4v2.4h-2.4zM387.7 588.4h2.2v2.2h-2.2zM293.2 596.2h2.3v2.3h-2.3zM335.8 594.0h1.9v1.9h-1.9zM284.5 596.5h1.4v1.4h-1.4zM390.7 588.9h1.4v1.4h-1.4zM216.4 602.4h1.6v1.6h-1.6zM241.1 600.6h1.6v1.6h-1.6z" stroke="none"/>
<path d="M388.0 604.6h1.9v1.9h-1.9zM377.9 601.5h1.3v1.3h-1.3zM371.6 602.3h2.3v2.3h-2.3zM396.3 601.5h1.7v1.7h-1.7zM386.9 605.1h2.0v2.0h-2.0zM376.1 609.0h1.4v1.4h-1.4zM381.2 603.1h2.4v2.4h-2.4zM377.5 612.6h2.5v2.5h-2.5zM380.7 603.6h2.6v2.6h-2.6zM389.5 601.0h1.3v1.3h-1.3zM377.2 606.2h2.5v2.5h-2.5zM372.5 606.1h1.7v1.7h-1.7zM370.5 601.3h1.9v1.9h-1.9zM377.3 606.6h1.7v1.7h-1.7zM391.3 602.5h1.4v1.4h-1.4zM375.1 605.3h2.0v2.0h-2.0zM388.2 602.1h1.8v1.8h-1.8zM372.4 601.3h1.8v1.8h-1.8zM368.3 604.7h1.6v1.6h-1.6zM377.4 604.0h2.4v2.4h-2.4zM382.5 600.2h2.5v2.5h-2.5zM385.3 605.9h1.4v1.4h-1.4z" stroke="none"/>
<path d="M50.3 610.5h1.6v1.6h-1.6zM32.4 622.3h1.8v1.8h-1.8zM43.1 628.8h1.8v1.8h-1.8zM32.6 620.9h2.2v2.2h-2.2zM44.6 605.3h2.8v2.8h-2.8zM30.3 618.8h3.0v3.0h-3.0zM37.5 626.7h2.9v2.9h-2.9zM40.4 607.0h2.5v2.5h-2.5zM52.0 611.0h2.0v2.0h-2.0zM36.3 625.9h2.3v2.3h-2.3zM34.7 625.0h2.9v2.9h-2.9zM33.3 611.5h1.5v1.5h-1.5zM49.5 610.4h2.6v2.6h-2.6zM42.2 607.1h2.6v2.6h-2.6zM32.9 621.9h1.7v1.7h-1.7zM51.7 619.8h2.0v2.0h-2.0zM32.2 623.5h2.2v2.2h-2.2zM46.9 626.4h1.6v1.6h-1.6zM31.1 620.4h2.0v2.0h-2.0zM38.8 627.9h2.3v2.3h-2.3zM31.4 618.3h2.9v2.9h-2.9zM32.4 621.4h2.4v2.4h-2.4zM33.3 612.1h1.8v1.8h-1.8zM33.0 622.7h2.5v2.5h-2.5zM36.9 626.9h1.5v1.5h-1.5zM37.1 608.5h2.5v2.5h-2.5zM51.5 611.2h3.0v3.0h-3.0zM46.1 626.8h1.9v1.9h-1.9zM49.9 610.9h1.7v1.7h-1.7zM47.4 607.9h2.6v2.6h-2.6zM37.5 626.7h3.0v3.0h-3.0zM36.3 608.9h2.5v2.5h-2.5zM41.2 627.6h2.4v2.4h-2.4zM33.0 611.1h2.8v2.8h-2.8zM52.2 616.6h2.2v2.2h-2.2zM34.7 625.1h1.7v1.7h-1.7zM52.2 614.5h2.3v2.3h-2.3zM32.3 611.5h1.7v1.7h-1.7zM40.7 606.9h2.7v2.7h-2.7zM41.8 606.4h1.7v1.7h-1.7zM42.7 606.2h2.5v2.5h-2.5zM40.3 629.1h2.7v2.7h-2.7zM31.6 611.0h2.6v2.6h-2.6zM32.1 621.8h1.8v1.8h-1.8zM31.6 614.3h2.4v2.4h-2.4zM31.9 617.5h2.1v2.1h-2.1zM40.9 628.3h1.6v1.6h-1.6zM47.3 627.1h2.5v2.5h-2.5zM30.6 618.2h2.0v2.0h-2.0zM42.1 606.7h2.8v2.8h-2.8zM52.8 619.3h2.8v2.8h-2.8zM45.8 627.6h2.9v2.9h-2.9zM37.3 626.4h3.0v3.0h-3.0zM36.3 626.7h2.5v2.5h-2.5zM52.9 622.7h1.8v1.8h-1.8zM52.2 614.1h2.0v2.0h-2.0zM42.6 629.3h1.8v1.8h-1.8zM50.8 611.5h1.9v1.9h-1.9zM40.6 606.6h1.8v1.8h-1.8zM33.4 610.5h1.7v1.7h-1.7zM45.5 628.7h1.5v1.5h-1.5zM34.5 625.1h1.6v1.6h-1.6zM31.7 613.5h2.4v2.4h-2.4zM31.5 615.7h2.5v2.5h-2.5zM30.8 612.8h1.7v1.7h-1.7zM50.3 608.2h2.8v2.8h-2.8zM33.9 610.9h2.1v2.1h-2.1zM49.7 624.2h2.2v2.2h-2.2zM40.5 629.1h2.2v2.2h-2.2zM44.5 627.2h1.8v1.8h-1.8z" stroke="none"/>
<path d="M59.8 623.5h2.6v2.6h-2.6zM96.6 619.5h2.2v2.2h-2.2zM71.4 607.3h1.8v1.8h-1.8zM67.1 608.4h1.8v1.8h-1.8zM82.5 621.0h1.7v1.7h-1.7zM62.5 624.1h2.7v2.7h-2.7zM77.5 621.2h2.7v2.7h-2.7zM98.4 606.6h2.5v2.5h-2.5zM63.3 621.8h1.8v1.8h-1.8zM96.5 620.8h1.7v1.7h-1.7zM58.1 623.2h2.4v2.4h-2.4zM97.3 607.0h2.0v2.0h-2.0zM79.1 608.6h2.3v2.3h-2.3zM66.2 609.0h2.1v2.1h-2.1zM74.8 608.2h2.4v2.4h-2.4zM74.4 609.0h2.7v2.7h-2.7zM52.2 610.4h2.0v2.0h-2.0zM99.9 606.8h1.7v1.7h-1.7zM57.2 610.1h2.3v2.3h-2.3zM56.5 622.3h1.8v1.8h-1.8zM71.1 623.0h2.1v2.1h-2.1zM62.2 607.7h2.0v2.0h-2.0zM91.8 607.5h2.0v2.0h-2.0zM91.4 620.6h1.9v1.9h-1.9zM75.4 608.5h2.4v2.4h-2.4zM81.6 622.4h1.9v1.9h-1.9zM51.4 623.8h2.1v2.1h-2.1zM53.2 622.7h2.3v2.3h-2.3zM77.6 620.9h2.5v2.5h-2.5zM67.4 623.3h2.6v2.6h-2.6zM62.9 608.0h2.4v2.4h-2.4zM58.9 622.2h1.8v1.8h-1.8zM58.8 608.4h2.5v2.5h-2.5zM79.5 608.1h1.8v1.8h-1.8zM85.3 621.1h2.3v2.3h-2.3zM88.7 607.2h2.4v2.4h-2.4zM57.6 609.5h1.9v1.9h-1.9zM58.0 610.0h2.1v2.1h-2.1zM81.6 621.5h1.7v1.7h-1.7zM97.6 605.4h1.6v1.6h-1.6zM84.2 621.9h2.7v2.7h-2.7zM92.9 619.8h2.0v2.0h-2.0zM73.3 621.7h2.8v2.8h-2.8zM89.2 607.6h1.9v1.9h-1.9zM94.4 607.3h1.8v1.8h-1.8zM54.2 623.8h2.0v2.0h-2.0zM59.1 622.9h2.7v2.7h-2.7zM74.6 607.3h2.2v2.2h-2.2zM77.3 621.1h2.4v2.4h-2.4zM67.9 621.6h2.0v2.0h-2.0zM83.6 621.7h2.3v2.3h-2.3zM93.7 606.9h1.7v1.7h-1.7zM98.8 619.7h2.6v2.6h-2.6zM92.6 606.8h2.8v2.8h-2.8zM76.3 621.2h2.4v2.4h-2.4zM75.4 621.0h2.4v2.4h-2.4zM63.7 623.3h1.8v1.8h-1.8zM91.6 607.7h1.9v1.9h-1.9zM57.6 623.4h1.7v1.7h-1.7zM97.2 619.5h2.3v2.3h-2.3z" stroke="none"/>
<path d="M622.6 601.6h2.2v2.2h-2.2zM744.5 609.5h2.7v2.7h-2.7zM665.0 600.0h2.7v2.7h-2.7zM680.1 596.7h2.8v2.8h-2.8zM648.5 602.2h2.4v2.4h-2.4zM788.8 607.3h1.9v1.9h-1.9zM667.5 600.5h1.9v1.9h-1.9zM647.8 620.1h2.5v2.5h-2.5zM733.8 609.7h2.6v2.6h-2.6zM652.6 600.7h2.5v2.5h-2.5zM767.3 597.1h2.2v2.2h-2.2zM645.3 600.3h2.3v2.3h-2.3zM703.5 614.7h2.9v2.9h-2.9zM796.6 596.0h1.9v1.9h-1.9zM711.0 611.9h2.7v2.7h-2.7zM647.5 619.9h1.6v1.6h-1.6zM643.3 600.5h2.4v2.4h-2.4zM640.2 602.8h2.4v2.4h-2.4zM728.9 599.8h2.6v2.6h-2.6zM769.8 597.1h2.4v2.4h-2.4zM753.9 598.3h2.1v2.1h-2.1zM814.6 605.5h2.5v2.5h-2.5zM679.2 618.2h2.4v2.4h-2.4zM731.4 599.6h2.4v2.4h-2.4zM680.9 618.9h2.4v2.4h-2.4zM679.6 619.6h1.7v1.7h-1.7zM645.5 601.7h1.6v1.6h-1.6zM622.6 603.3h2.0v2.0h-2.0zM605.5 622.9h1.6v1.6h-1.6zM669.5 597.6h2.5v2.5h-2.5zM681.9 599.9h1.8v1.8h-1.8zM697.5 596.7h2.3v2.3h-2.3zM675.3 616.9h2.0v2.0h-2.0zM661.1 618.3h1.9v1.9h-1.9zM749.8 608.4h1.9v1.9h-1.9zM743.1 609.7h2.3v2.3h-2.3zM684.5 617.0h3.0v3.0h-3.0zM775.6 606.6h2.4v2.4h-2.4zM668.8 600.8h2.1v2.1h-2.1zM614.6 621.2h2.7v2.7h-2.7zM787.3 605.9h1.8v1.8h-1.8zM776.2 596.5h2.3v2.3h-2.3zM691.6 598.0h2.7v2.7h-2.7zM724.3 600.5h2.3v2.3h-2.3zM777.3 607.5h1.7v1.7h-1.7zM706.7 600.1h1.7v1.7h-1.7zM742.4 609.3h2.6v2.6h-2.6zM743.1 598.5h1.8v1.8h-1.8zM803.4 606.0h2.9v2.9h-2.9zM775.8 606.8h2.7v2.7h-2.7zM629.0 600.9h1.7v1.7h-1.7zM699.7 614.8h1.9v1.9h-1.9zM659.8 600.5h2.5v2.5h-2.5zM771.9 607.8h2.7v2.7h-2.7zM651.4 599.7h2.3v2.3h-2.3zM785.1 606.4h2.6v2.6h-2.6zM668.2 617.3h2.6v2.6h-2.6zM751.1 609.5h1.8v1.8h-1.8zM722.7 610.7h2.5v2.5h-2.5zM739.5 598.8h2.8v2.8h-2.8zM610.6 622.4h3.0v3.0h-3.0zM791.9 606.4h2.6v2.6h-2.6zM708.4 601.0h2.7v2.7h-2.7zM705.0 601.0h1.7v1.7h-1.7zM685.3 616.7h2.2v2.2h-2.2zM618.3 623.5h1.7v1.7h-1.7zM756.1 598.5h2.7v2.7h-2.7zM669.1 596.2h2.8v2.8h-2.8zM681.5 617.5h2.2v2.2h-2.2zM633.1 619.1h1.7v1.7h-1.7zM731.2 610.5h2.9v2.9h-2.9zM612.7 624.5h2.9v2.9h-2.9zM633.7 599.3h2.6v2.6h-2.6zM701.3 594.8h2.0v2.0h-2.0zM795.5 605.4h2.4v2.4h-2.4zM810.6 594.4h2.6v2.6h-2.6zM620.1 600.5h2.0v2.0h-2.0zM764.9 608.2h2.9v2.9h-2.9zM661.3 617.5h2.1v2.1h-2.1zM737.8 599.4h2.8v2.8h-2.8zM757.7 608.6h1.9v1.9h-1.9zM734.3 599.2h1.8v1.8h-1.8zM608.7 602.6h2.1v2.1h-2.1zM713.3 600.1h2.8v2.8h-2.8zM766.8 596.9h2.4v2.4h-2.4zM640.2 599.0h2.0v2.0h-2.0zM819.4 603.8h2.8v2.8h-2.8zM673.2 618.4h2.2v2.2h-2.2zM658.0 601.3h1.8v1.8h-1.8zM729.4 600.1h2.4v2.4h-2.4zM778.0 606.5h2.6v2.6h-2.6zM675.2 597.6h2.4v2.4h-2.4zM777.2 596.3h1.7v1.7h-1.7zM800.8 605.3h2.8v2.8h-2.8zM653.3 597.8h2.7v2.7h-2.7zM794.9 606.4h2.0v2.0h-2.0zM773.4 608.0h2.6v2.6h-2.6zM655.1 618.8h1.6v1.6h-1.6zM638.5 620.7h1.9v1.9h-1.9zM607.9 599.9h2.4v2.4h-2.4zM682.3 618.8h2.0v2.0h-2.0zM643.9 619.2h1.7v1.7h-1.7zM712.2 600.2h2.9v2.9h-2.9zM805.5 595.3h2.6v2.6h-2.6zM730.0 609.5h2.8v2.8h-2.8zM723.4 600.5h2.8v2.8h-2.8zM672.4 597.5h2.6v2.6h-2.6zM733.2 610.2h2.5v2.5h-2.5zM783.4 596.3h2.9v2.9h-2.9zM667.3 600.0h1.7v1.7h-1.7zM783.8 595.7h2.9v2.9h-2.9zM775.4 607.7h3.0v3.0h-3.0zM778.8 597.1h2.3v2.3h-2.3zM633.5 599.4h2.7v2.7h-2.7zM767.6 607.7h2.4v2.4h-2.4zM676.2 618.4h2.7v2.7h-2.7zM783.4 606.5h2.6v2.6h-2.6zM690.4 598.8h2.7v2.7h-2.7zM700.9 597.4h2.9v2.9h-2.9zM643.1 598.5h2.4v2.4h-2.4zM755.1 598.1h2.1v2.1h-2.1zM766.2 607.6h2.4v2.4h-2.4zM660.8 601.1h2.2v2.2h-2.2zM689.2 598.8h2.4v2.4h-2.4zM627.0 601.5h3.0v3.0h-3.0zM637.3 602.1h2.3v2.3h-2.3zM669.7 596.2h2.4v2.4h-2.4zM649.8 599.3h2.2v2.2h-2.2zM753.9 597.7h2.0v2.0h-2.0zM735.8 610.4h3.0v3.0h-3.0zM692.1 596.3h1.9v1.9h-1.9zM626.6 620.0h1.6v1.6h-1.6zM776.9 606.5h1.9v1.9h-1.9zM680.8 615.7h2.5v2.5h-2.5zM708.8 611.4h2.3v2.3h-2.3zM792.5 606.4h2.3v2.3h-2.3zM612.5 622.5h2.4v2.4h-2.4zM642.6 618.6h2.9v2.9h-2.9zM713.1 610.9h2.3v2.3h-2.3zM782.7 596.3h2.0v2.0h-2.0zM802.8 605.4h2.9v2.9h-2.9zM788.6 595.3h2.8v2.8h-2.8zM817.4 594.4h2.5v2.5h-2.5zM662.4 600.3h1.8v1.8h-1.8zM714.5 610.5h2.1v2.1h-2.1zM716.3 610.3h2.8v2.8h-2.8zM616.8 622.9h2.0v2.0h-2.0zM783.6 606.1h2.9v2.9h-2.9zM792.7 594.6h1.7v1.7h-1.7zM638.2 620.7h2.6v2.6h-2.6zM778.7 596.3h2.7v2.7h-2.7zM612.4 619.9h2.7v2.7h-2.7zM774.2 607.3h1.7v1.7h-1.7zM791.5 605.7h2.7v2.7h-2.7zM660.4 618.1h1.7v1.7h-1.7zM810.5 605.8h2.0v2.0h-2.0zM621.4 621.7h2.7v2.7h-2.7zM727.3 599.1h2.0v2.0h-2.0zM698.0 596.8h2.7v2.7h-2.7zM776.6 596.9h2.6v2.6h-2.6zM635.4 601.9h2.0v2.0h-2.0zM740.0 598.3h2.5v2.5h-2.5zM670.6 598.6h1.7v1.7h-1.7zM706.2 611.1h1.7v1.7h-1.7zM651.5 621.6h2.7v2.7h-2.7zM791.6 596.3h2.6v2.6h-2.6zM727.7 609.9h1.6v1.6h-1.6zM694.3 615.5h1.9v1.9h-1.9zM797.4 595.6h2.6v2.6h-2.6zM795.4 605.7h2.2v2.2h-2.2zM659.8 599.4h2.4v2.4h-2.4zM787.9 606.1h1.9v1.9h-1.9zM660.4 617.7h2.4v2.4h-2.4zM812.3 604.9h2.2v2.2h-2.2zM767.0 597.7h2.6v2.6h-2.6zM728.5 599.0h2.5v2.5h-2.5zM688.0 616.9h2.8v2.8h-2.8zM820.8 603.8h2.3v2.3h-2.3zM732.1 599.3h2.5v2.5h-2.5zM806.8 606.1h2.8v2.8h-2.8zM767.2 597.0h1.6v1.6h-1.6zM611.7 620.8h2.2v2.2h-2.2zM794.8 595.6h1.9v1.9h-1.9zM808.7 595.0h1.6v1.6h-1.6zM766.3 608.1h2.0v2.0h-2.0zM633.9 603.2h2.5v2.5h-2.5zM743.8 598.9h2.6v2.6h-2.6zM794.6 605.4h1.6v1.6h-1.6zM758.4 597.1h2.1v2.1h-2.1zM629.4 619.5h2.2v2.2h-2.2zM691.4 596.7h2.1v2.1h-2.1zM717.9 600.8h2.5v2.5h-2.5zM782.0 595.3h2.4v2.4h-2.4zM710.8 600.2h2.6v2.6h-2.6zM697.2 594.0h1.8v1.8h-1.8zM660.2 617.0h2.1v2.1h-2.1zM669.2 617.2h2.4v2.4h-2.4zM810.6 595.0h1.8v1.8h-1.8zM627.4 619.6h2.3v2.3h-2.3zM760.3 597.4h2.8v2.8h-2.8zM782.5 606.6h3.0v3.0h-3.0zM783.2 606.7h2.0v2.0h-2.0zM777.1 596.8h1.9v1.9h-1.9zM616.9 621.5h2.3v2.3h-2.3zM676.5 617.5h2.8v2.8h-2.8zM749.1 608.5h2.3v2.3h-2.3zM737.5 599.4h2.1v2.1h-2.1zM642.5 599.8h2.8v2.8h-2.8zM799.8 606.0h2.5v2.5h-2.5zM801.2 594.6h2.0v2.0h-2.0zM809.6 605.2h2.1v2.1h-2.1zM647.9 598.5h2.2v2.2h-2.2zM750.2 597.2h2.5v2.5h-2.5zM655.3 619.8h2.4v2.4h-2.4zM788.6 606.9h2.9v2.9h-2.9zM700.0 617.6h2.2v2.2h-2.2zM755.6 598.4h2.9v2.9h-2.9zM739.3 599.3h2.2v2.2h-2.2zM811.7 593.4h1.6v1.6h-1.6zM814.5 605.0h2.0v2.0h-2.0zM643.1 602.2h2.7v2.7h-2.7zM657.9 600.9h2.2v2.2h-2.2zM643.2 602.4h2.9v2.9h-2.9zM756.2 598.3h1.6v1.6h-1.6zM655.5 597.6h2.4v2.4h-2.4zM687.9 619.2h1.7v1.7h-1.7zM714.2 600.7h2.2v2.2h-2.2zM755.9 608.0h2.7v2.7h-2.7zM619.1 603.5h1.6v1.6h-1.6zM622.8 620.6h2.2v2.2h-2.2zM811.7 594.0h2.1v2.1h-2.1zM672.3 618.4h2.3v2.3h-2.3zM756.0 608.0h1.7v1.7h-1.7zM729.0 609.8h2.3v2.3h-2.3zM663.6 601.3h2.6v2.6h-2.6zM632.7 603.0h3.0v3.0h-3.0zM715.6 600.8h2.2v2.2h-2.2zM752.5 609.6h2.2v2.2h-2.2zM704.0 600.6h2.8v2.8h-2.8zM800.8 594.9h2.5v2.5h-2.5zM787.8 596.0h2.2v2.2h-2.2zM641.9 621.2h2.6v2.6h-2.6zM780.2 596.3h1.8v1.8h-1.8zM609.8 623.2h2.8v2.8h-2.8zM770.8 596.3h1.9v1.9h-1.9zM820.8 604.7h2.0v2.0h-2.0zM813.9 593.5h2.7v2.7h-2.7zM650.4 599.6h2.0v2.0h-2.0zM672.4 596.6h1.7v1.7h-1.7zM629.0 622.1h3.0v3.0h-3.0zM709.3 611.1h1.6v1.6h-1.6zM795.1 606.0h2.6v2.6h-2.6zM799.5 595.5h1.8v1.8h-1.8zM622.9 620.5h2.7v2.7h-2.7zM664.6 598.2h2.6v2.6h-2.6zM630.0 600.5h2.8v2.8h-2.8zM715.8 600.8h1.7v1.7h-1.7zM621.6 601.8h1.9v1.9h-1.9zM621.5 602.7h2.8v2.8h-2.8zM672.9 600.7h2.5v2.5h-2.5z" stroke="none"/>
<path d="M491.7 574.9h2.9v2.9h-2.9zM483.3 578.6h2.6v2.6h-2.6zM472.3 572.4h2.0v2.0h-2.0zM466.5 578.5h3.0v3.0h-3.0zM465.7 576.1h3.0v3.0h-3.0zM500.0 574.6h3.0v3.0h-3.0zM459.4 575.7h2.0v2.0h-2.0zM481.3 576.5h1.8v1.8h-1.8zM527.1 578.6h2.9v2.9h-2.9zM436.4 572.9h1.8v1.8h-1.8zM469.4 575.6h2.1v2.1h-2.1zM461.9 578.5h2.4v2.4h-2.4zM497.4 578.0h1.6v1.6h-1.6zM484.7 579.0h1.9v1.9h-1.9zM448.3 573.4h2.7v2.7h-2.7zM466.5 572.0h2.0v2.0h-2.0zM487.5 573.2h1.7v1.7h-1.7zM511.8 572.3h2.3v2.3h-2.3zM515.3 579.0h2.0v2.0h-2.0zM492.2 572.2h2.0v2.0h-2.0zM488.3 572.6h2.5v2.5h-2.5zM495.2 572.4h2.2v2.2h-2.2zM497.4 575.4h1.6v1.6h-1.6zM522.4 573.6h1.6v1.6h-1.6zM485.0 578.3h2.1v2.1h-2.1zM514.5 576.4h1.6v1.6h-1.6zM510.9 579.1h1.5v1.5h-1.5zM444.3 579.3h1.9v1.9h-1.9zM525.9 572.5h1.9v1.9h-1.9zM514.8 572.0h2.7v2.7h-2.7zM454.0 574.4h2.7v2.7h-2.7zM516.7 572.0h1.9v1.9h-1.9zM504.2 574.2h2.2v2.2h-2.2zM484.9 575.3h2.8v2.8h-2.8zM483.3 573.2h2.0v2.0h-2.0zM455.3 572.8h1.7v1.7h-1.7zM494.1 574.5h1.6v1.6h-1.6zM484.9 575.1h2.4v2.4h-2.4zM473.6 572.7h1.7v1.7h-1.7zM452.0 576.2h2.7v2.7h-2.7zM458.3 575.3h2.4v2.4h-2.4zM517.2 573.7h2.6v2.6h-2.6zM519.0 573.7h1.5v1.5h-1.5zM477.9 574.0h2.4v2.4h-2.4zM490.4 578.1h2.9v2.9h-2.9zM466.9 579.9h2.6v2.6h-2.6zM527.7 575.1h2.1v2.1h-2.1zM475.7 573.3h2.1v2.1h-2.1z" stroke="none"/>
<path d="M524.9 623.8h1.9v1.9h-1.9zM555.5 624.1h3.3v3.3h-3.3zM556.0 608.0h2.1v2.1h-2.1zM585.5 623.2h2.2v2.2h-2.2zM587.4 608.1h1.8v1.8h-1.8zM530.9 612.0h2.3v2.3h-2.3zM574.3 609.7h2.3v2.3h-2.3zM527.8 625.8h2.3v2.3h-2.3zM606.3 606.3h3.2v3.2h-3.2zM542.3 623.5h3.3v3.3h-3.3zM581.5 609.4h2.4v2.4h-2.4zM520.5 612.2h2.2v2.2h-2.2zM573.6 621.2h3.3v3.3h-3.3zM542.1 623.4h2.4v2.4h-2.4zM579.9 608.8h2.3v2.3h-2.3zM523.0 610.8h2.8v2.8h-2.8zM541.3 609.6h3.3v3.3h-3.3zM575.2 609.4h2.5v2.5h-2.5zM586.8 620.9h2.1v2.1h-2.1zM579.5 608.8h2.3v2.3h-2.3zM574.0 623.2h2.3v2.3h-2.3zM544.8 622.7h3.0v3.0h-3.0zM570.1 622.8h2.5v2.5h-2.5zM525.7 610.2h1.9v1.9h-1.9zM606.3 619.9h2.2v2.2h-2.2zM574.4 609.2h2.6v2.6h-2.6zM601.9 606.9h3.1v3.1h-3.1zM531.3 625.1h2.9v2.9h-2.9zM553.9 625.1h1.9v1.9h-1.9zM568.5 607.2h2.8v2.8h-2.8zM551.5 610.3h3.1v3.1h-3.1zM602.1 622.8h2.6v2.6h-2.6zM595.7 621.1h2.0v2.0h-2.0zM597.1 608.4h2.4v2.4h-2.4zM546.1 608.3h2.1v2.1h-2.1zM514.7 625.6h2.5v2.5h-2.5zM518.2 624.1h2.8v2.8h-2.8zM551.3 624.1h2.3v2.3h-2.3zM604.2 605.2h2.0v2.0h-2.0zM522.8 610.6h2.1v2.1h-2.1zM588.9 621.1h2.8v2.8h-2.8zM550.7 608.2h1.9v1.9h-1.9zM611.4 619.6h1.8v1.8h-1.8zM607.9 620.6h2.5v2.5h-2.5zM583.6 621.0h3.1v3.1h-3.1zM558.5 607.9h3.4v3.4h-3.4zM518.1 609.8h2.7v2.7h-2.7zM599.5 605.1h2.5v2.5h-2.5zM550.5 625.5h2.0v2.0h-2.0zM542.0 609.8h3.0v3.0h-3.0zM570.9 622.8h2.6v2.6h-2.6zM582.7 607.6h2.5v2.5h-2.5zM563.0 624.2h2.3v2.3h-2.3zM548.2 623.4h2.9v2.9h-2.9zM550.3 623.1h2.2v2.2h-2.2zM604.2 606.5h1.9v1.9h-1.9zM568.2 624.3h2.1v2.1h-2.1zM590.3 605.3h2.7v2.7h-2.7zM599.8 620.2h1.9v1.9h-1.9zM582.9 620.7h2.8v2.8h-2.8zM590.9 606.4h3.3v3.3h-3.3zM545.4 625.6h2.7v2.7h-2.7zM522.8 624.7h3.2v3.2h-3.2zM525.1 609.7h2.5v2.5h-2.5zM611.8 620.5h3.1v3.1h-3.1zM610.5 607.9h3.0v3.0h-3.0zM599.4 607.6h1.9v1.9h-1.9zM522.0 608.9h2.7v2.7h-2.7zM572.8 608.6h2.7v2.7h-2.7zM540.2 610.0h2.6v2.6h-2.6zM520.2 612.3h2.4v2.4h-2.4zM606.4 603.6h2.8v2.8h-2.8zM520.0 609.7h3.3v3.3h-3.3zM530.7 624.7h2.7v2.7h-2.7zM535.8 626.8h3.0v3.0h-3.0zM610.1 606.9h3.3v3.3h-3.3zM552.0 624.2h2.5v2.5h-2.5zM560.7 624.6h3.1v3.1h-3.1zM539.9 610.0h3.1v3.1h-3.1zM571.7 624.3h3.0v3.0h-3.0zM589.1 605.3h3.0v3.0h-3.0zM604.7 623.0h2.6v2.6h-2.6zM608.2 619.7h2.7v2.7h-2.7zM514.9 624.4h2.4v2.4h-2.4zM524.9 612.4h2.4v2.4h-2.4zM596.7 620.8h2.9v2.9h-2.9zM520.4 611.7h2.7v2.7h-2.7zM558.1 610.6h2.6v2.6h-2.6zM587.1 608.7h3.0v3.0h-3.0zM580.2 620.6h2.3v2.3h-2.3zM539.7 623.6h2.9v2.9h-2.9zM602.4 606.4h2.4v2.4h-2.4zM568.1 605.3h2.9v2.9h-2.9zM565.5 621.9h2.3v2.3h-2.3zM570.0 622.5h2.0v2.0h-2.0zM556.8 624.3h2.8v2.8h-2.8zM590.3 607.2h2.2v2.2h-2.2zM545.6 625.0h2.5v2.5h-2.5zM590.2 620.3h2.1v2.1h-2.1zM539.8 626.9h1.9v1.9h-1.9zM601.1 622.2h2.8v2.8h-2.8zM603.3 608.1h3.3v3.3h-3.3zM552.0 626.0h2.1v2.1h-2.1zM587.5 607.5h2.4v2.4h-2.4zM575.6 608.7h2.6v2.6h-2.6zM593.1 621.5h3.4v3.4h-3.4zM519.6 624.0h2.0v2.0h-2.0zM611.7 605.8h2.8v2.8h-2.8zM573.9 609.3h2.7v2.7h-2.7zM539.1 623.6h2.8v2.8h-2.8zM539.6 610.8h2.7v2.7h-2.7zM598.7 605.8h2.1v2.1h-2.1zM594.2 607.0h3.2v3.2h-3.2zM529.9 612.1h3.0v3.0h-3.0zM558.2 610.5h2.9v2.9h-2.9zM556.1 622.8h3.1v3.1h-3.1zM548.0 623.9h3.0v3.0h-3.0zM578.9 608.5h2.1v2.1h-2.1zM547.5 622.9h2.2v2.2h-2.2zM574.6 621.3h2.3v2.3h-2.3zM593.2 608.0h3.2v3.2h-3.2zM564.0 622.9h3.2v3.2h-3.2zM537.2 624.1h2.7v2.7h-2.7zM523.0 612.0h2.4v2.4h-2.4zM518.9 625.4h2.0v2.0h-2.0zM576.8 607.1h2.8v2.8h-2.8zM592.9 607.3h2.4v2.4h-2.4zM539.8 623.9h3.4v3.4h-3.4zM517.9 628.4h3.3v3.3h-3.3zM521.0 608.5h2.6v2.6h-2.6zM564.0 622.3h3.0v3.0h-3.0zM604.4 606.2h3.2v3.2h-3.2zM589.6 622.7h2.3v2.3h-2.3zM559.1 607.5h3.2v3.2h-3.2zM604.1 621.8h2.0v2.0h-2.0zM552.9 626.6h3.0v3.0h-3.0zM578.3 623.0h3.2v3.2h-3.2zM590.9 620.7h2.1v2.1h-2.1zM590.3 608.9h3.4v3.4h-3.4zM577.4 623.2h2.4v2.4h-2.4zM559.0 622.4h3.3v3.3h-3.3zM579.6 621.7h2.3v2.3h-2.3zM537.7 609.8h3.1v3.1h-3.1zM610.5 606.0h2.2v2.2h-2.2zM581.0 623.4h3.4v3.4h-3.4zM603.6 608.1h2.0v2.0h-2.0zM591.5 624.0h2.4v2.4h-2.4zM541.7 623.8h2.4v2.4h-2.4zM525.3 625.2h2.0v2.0h-2.0zM576.3 606.3h2.7v2.7h-2.7zM527.1 624.1h2.4v2.4h-2.4zM543.4 611.3h3.1v3.1h-3.1zM521.6 625.0h2.3v2.3h-2.3zM516.3 624.4h2.1v2.1h-2.1zM576.4 623.7h2.5v2.5h-2.5zM555.1 607.1h2.8v2.8h-2.8zM548.8 610.3h1.8v1.8h-1.8zM519.4 611.5h3.3v3.3h-3.3zM538.9 611.1h2.9v2.9h-2.9zM583.9 607.7h2.8v2.8h-2.8zM552.8 609.7h2.9v2.9h-2.9zM555.5 623.1h1.9v1.9h-1.9zM524.8 608.8h2.7v2.7h-2.7zM578.6 621.5h2.6v2.6h-2.6zM548.3 625.1h3.3v3.3h-3.3zM552.1 608.0h2.4v2.4h-2.4zM543.1 610.7h2.8v2.8h-2.8zM570.5 621.4h2.9v2.9h-2.9zM606.9 606.4h2.4v2.4h-2.4zM598.0 607.0h2.3v2.3h-2.3z" stroke="none" fill="#5cc596"/>
<path d="M501.9 614.6h2.3v2.3h-2.3zM515.2 575.3h1.9v1.9h-1.9zM500.4 584.4h2.2v2.2h-2.2zM500.1 591.2h2.7v2.7h-2.7zM514.3 588.7h2.1v2.1h-2.1zM515.7 609.8h2.4v2.4h-2.4zM516.1 610.1h3.3v3.3h-3.3zM501.4 572.5h2.0v2.0h-2.0zM517.4 615.4h2.1v2.1h-2.1zM500.0 589.1h2.9v2.9h-2.9zM499.2 597.9h2.6v2.6h-2.6zM499.2 611.4h1.8v1.8h-1.8zM517.2 573.6h1.9v1.9h-1.9zM514.9 610.1h3.1v3.1h-3.1zM515.5 607.8h2.1v2.1h-2.1zM501.8 601.1h3.1v3.1h-3.1zM515.0 578.9h2.7v2.7h-2.7zM516.2 602.7h2.7v2.7h-2.7zM501.4 584.4h3.2v3.2h-3.2zM517.8 598.3h2.4v2.4h-2.4zM514.5 585.2h2.3v2.3h-2.3zM500.6 574.9h3.0v3.0h-3.0zM515.4 586.7h1.8v1.8h-1.8zM514.2 586.3h2.7v2.7h-2.7zM515.4 583.4h2.3v2.3h-2.3zM515.3 601.6h2.1v2.1h-2.1zM516.7 597.7h2.0v2.0h-2.0zM500.0 594.9h2.1v2.1h-2.1zM517.9 609.5h2.8v2.8h-2.8zM514.9 609.3h2.4v2.4h-2.4zM500.0 572.2h2.4v2.4h-2.4zM501.0 607.6h3.3v3.3h-3.3zM500.5 574.3h1.8v1.8h-1.8zM500.7 596.2h2.1v2.1h-2.1zM501.5 579.5h2.7v2.7h-2.7zM500.2 582.5h3.3v3.3h-3.3zM500.2 586.4h2.4v2.4h-2.4zM518.0 579.8h2.9v2.9h-2.9zM514.8 607.0h2.2v2.2h-2.2zM516.4 601.8h2.4v2.4h-2.4zM499.8 610.9h2.0v2.0h-2.0zM499.3 602.6h2.9v2.9h-2.9zM497.9 611.4h2.1v2.1h-2.1zM499.8 585.6h3.2v3.2h-3.2zM514.9 607.3h2.6v2.6h-2.6zM498.7 591.8h1.8v1.8h-1.8zM501.2 577.6h2.0v2.0h-2.0zM502.0 571.9h2.6v2.6h-2.6zM515.6 574.8h2.0v2.0h-2.0zM502.0 591.6h2.9v2.9h-2.9zM501.3 575.1h2.8v2.8h-2.8zM514.4 599.9h3.0v3.0h-3.0zM499.5 572.9h1.9v1.9h-1.9zM501.2 607.0h2.2v2.2h-2.2zM515.9 590.8h1.8v1.8h-1.8zM499.2 583.4h2.2v2.2h-2.2zM518.9 588.2h2.1v2.1h-2.1zM517.1 590.6h3.3v3.3h-3.3zM516.0 597.3h3.0v3.0h-3.0zM501.9 615.7h3.3v3.3h-3.3zM499.5 614.6h2.8v2.8h-2.8zM501.8 606.0h1.8v1.8h-1.8zM515.2 615.2h2.3v2.3h-2.3zM500.0 595.6h2.4v2.4h-2.4zM498.9 596.8h3.1v3.1h-3.1zM516.2 583.0h2.1v2.1h-2.1zM514.4 589.4h1.9v1.9h-1.9zM517.3 584.4h3.2v3.2h-3.2zM501.8 610.4h2.4v2.4h-2.4zM501.8 589.2h1.8v1.8h-1.8zM501.4 605.6h2.2v2.2h-2.2zM514.3 589.4h3.1v3.1h-3.1zM516.6 595.3h3.3v3.3h-3.3zM515.5 595.8h2.3v2.3h-2.3zM514.4 597.0h3.0v3.0h-3.0zM515.2 586.5h2.5v2.5h-2.5zM516.5 578.6h2.8v2.8h-2.8zM514.8 602.7h2.9v2.9h-2.9zM517.5 571.9h2.6v2.6h-2.6zM499.2 589.1h3.2v3.2h-3.2zM515.3 606.4h3.4v3.4h-3.4zM515.6 598.2h3.4v3.4h-3.4zM515.8 607.0h2.8v2.8h-2.8zM514.3 581.6h2.3v2.3h-2.3zM499.3 607.1h2.0v2.0h-2.0zM501.3 590.0h2.6v2.6h-2.6zM515.2 614.3h2.7v2.7h-2.7zM517.3 595.0h2.0v2.0h-2.0zM498.0 610.0h1.8v1.8h-1.8zM516.7 597.5h3.4v3.4h-3.4z" stroke="none" fill="#5cc596"/>
<path d="M607.6 578.2h2.4v2.4h-2.4zM617.0 582.0h2.0v2.0h-2.0zM617.0 601.3h2.5v2.5h-2.5zM608.1 587.4h2.1v2.1h-2.1zM617.4 575.1h1.9v1.9h-1.9zM617.7 596.8h1.9v1.9h-1.9zM607.0 609.0h2.1v2.1h-2.1zM617.4 577.5h2.0v2.0h-2.0zM618.4 591.3h2.7v2.7h-2.7zM606.1 585.8h2.1v2.1h-2.1zM608.6 611.4h1.9v1.9h-1.9zM617.3 597.2h2.9v2.9h-2.9zM606.0 605.5h2.9v2.9h-2.9zM618.5 589.0h2.0v2.0h-2.0zM616.7 591.3h1.8v1.8h-1.8zM606.6 598.4h2.7v2.7h-2.7zM605.9 577.7h2.6v2.6h-2.6zM617.1 594.3h2.3v2.3h-2.3zM608.3 596.2h2.1v2.1h-2.1zM618.5 581.7h2.9v2.9h-2.9zM618.8 600.7h2.6v2.6h-2.6zM608.2 609.0h2.5v2.5h-2.5zM608.2 594.9h3.0v3.0h-3.0zM608.3 577.9h3.1v3.1h-3.1zM608.4 589.7h2.3v2.3h-2.3zM617.0 578.5h1.8v1.8h-1.8zM617.8 596.5h3.1v3.1h-3.1zM607.1 606.9h2.0v2.0h-2.0zM607.0 603.6h2.0v2.0h-2.0zM606.1 582.1h2.1v2.1h-2.1zM617.1 599.4h1.9v1.9h-1.9zM606.4 590.1h2.6v2.6h-2.6zM617.4 606.3h2.9v2.9h-2.9zM618.2 595.7h3.0v3.0h-3.0zM608.4 578.1h1.9v1.9h-1.9zM606.0 584.4h3.0v3.0h-3.0zM607.3 575.8h2.0v2.0h-2.0zM617.8 605.5h2.9v2.9h-2.9zM618.4 599.8h2.5v2.5h-2.5zM607.2 602.7h2.1v2.1h-2.1zM618.7 576.7h2.1v2.1h-2.1zM616.8 606.9h2.4v2.4h-2.4zM617.7 582.4h2.5v2.5h-2.5zM608.3 599.3h2.1v2.1h-2.1zM618.9 588.6h2.7v2.7h-2.7zM606.5 607.1h1.8v1.8h-1.8zM617.8 601.1h2.4v2.4h-2.4zM619.7 575.4h2.8v2.8h-2.8zM618.5 603.5h2.2v2.2h-2.2zM619.4 600.9h2.0v2.0h-2.0z" stroke="none"/>
<path d="M807.5 568.9h1.9v1.9h-1.9zM822.9 569.7h2.0v2.0h-2.0zM822.0 571.4h1.6v1.6h-1.6zM824.0 567.8h2.4v2.4h-2.4zM809.6 570.3h2.8v2.8h-2.8zM805.9 571.1h2.4v2.4h-2.4zM814.6 571.7h2.0v2.0h-2.0zM813.7 574.3h2.4v2.4h-2.4zM806.3 569.9h2.7v2.7h-2.7zM804.5 563.9h2.3v2.3h-2.3zM823.1 567.5h2.7v2.7h-2.7zM805.1 567.3h2.3v2.3h-2.3zM819.9 572.5h2.5v2.5h-2.5zM809.3 570.0h1.9v1.9h-1.9zM823.1 567.6h2.5v2.5h-2.5zM817.3 572.8h2.3v2.3h-2.3zM819.0 573.1h1.9v1.9h-1.9zM804.7 561.9h1.8v1.8h-1.8zM824.0 567.1h1.6v1.6h-1.6zM813.8 571.9h2.3v2.3h-2.3zM812.6 573.0h2.5v2.5h-2.5zM812.1 571.4h2.7v2.7h-2.7zM804.0 560.3h2.2v2.2h-2.2zM807.7 569.6h2.0v2.0h-2.0zM814.1 573.7h2.1v2.1h-2.1zM823.4 567.4h2.0v2.0h-2.0zM821.3 569.7h2.1v2.1h-2.1zM812.6 571.4h2.1v2.1h-2.1zM813.9 572.1h2.0v2.0h-2.0zM806.6 560.9h1.7v1.7h-1.7zM820.2 571.3h2.1v2.1h-2.1zM803.8 565.5h2.8v2.8h-2.8zM804.4 562.5h1.8v1.8h-1.8zM807.4 569.6h2.6v2.6h-2.6z" stroke="none"/>
<path d="M721.5 575.8h1.9v1.9h-1.9zM725.7 576.3h1.9v1.9h-1.9zM737.8 584.9h2.6v2.6h-2.6zM737.0 581.2h1.7v1.7h-1.7zM724.4 592.7h1.9v1.9h-1.9zM724.2 585.4h2.3v2.3h-2.3zM736.8 593.6h2.5v2.5h-2.5zM737.7 590.8h2.2v2.2h-2.2zM725.3 588.2h2.4v2.4h-2.4zM738.0 599.1h2.5v2.5h-2.5zM736.9 596.3h2.2v2.2h-2.2zM736.4 588.6h2.7v2.7h-2.7zM726.7 598.1h1.9v1.9h-1.9zM725.9 591.8h2.8v2.8h-2.8zM723.3 573.8h2.9v2.9h-2.9zM736.7 594.2h1.6v1.6h-1.6zM735.3 591.7h2.4v2.4h-2.4zM735.5 597.1h2.7v2.7h-2.7zM725.7 580.9h2.4v2.4h-2.4zM735.1 591.0h2.2v2.2h-2.2zM724.5 580.7h1.7v1.7h-1.7zM738.7 575.5h2.1v2.1h-2.1zM726.8 577.1h2.9v2.9h-2.9zM736.0 577.1h3.0v3.0h-3.0zM738.7 583.4h2.0v2.0h-2.0zM723.5 575.7h1.7v1.7h-1.7zM726.2 596.8h2.5v2.5h-2.5zM725.4 581.1h2.5v2.5h-2.5zM735.7 581.2h2.8v2.8h-2.8zM726.1 574.2h1.9v1.9h-1.9zM737.8 576.0h1.9v1.9h-1.9zM726.7 577.7h2.3v2.3h-2.3zM726.2 585.0h2.2v2.2h-2.2zM722.8 600.0h1.9v1.9h-1.9zM735.1 591.6h1.7v1.7h-1.7zM723.9 582.5h3.0v3.0h-3.0zM723.7 592.6h2.3v2.3h-2.3zM724.7 584.2h2.3v2.3h-2.3zM724.8 580.0h2.3v2.3h-2.3zM725.5 573.4h1.5v1.5h-1.5zM734.9 587.4h2.1v2.1h-2.1zM724.5 579.5h1.5v1.5h-1.5zM721.9 598.9h1.8v1.8h-1.8zM726.5 599.7h2.8v2.8h-2.8zM737.9 578.9h1.7v1.7h-1.7zM725.2 574.1h2.3v2.3h-2.3zM726.5 590.1h2.9v2.9h-2.9zM722.8 592.3h2.5v2.5h-2.5zM737.7 596.3h1.7v1.7h-1.7zM725.9 591.1h2.8v2.8h-2.8zM723.7 590.7h2.6v2.6h-2.6zM724.9 582.2h2.5v2.5h-2.5zM735.9 587.3h1.5v1.5h-1.5zM737.4 600.9h1.8v1.8h-1.8zM736.0 578.0h2.7v2.7h-2.7zM736.3 581.7h2.4v2.4h-2.4zM736.0 590.6h2.8v2.8h-2.8zM725.6 580.3h2.7v2.7h-2.7zM734.9 592.2h1.8v1.8h-1.8zM725.2 587.3h2.2v2.2h-2.2z" stroke="none"/>
<path d="M564.2 599.3h1.9v1.9h-1.9zM549.6 591.9h2.3v2.3h-2.3zM550.1 598.1h2.8v2.8h-2.8zM563.6 605.2h2.9v2.9h-2.9zM564.5 596.3h1.6v1.6h-1.6zM548.5 615.3h1.6v1.6h-1.6zM564.2 614.0h1.8v1.8h-1.8zM563.1 609.1h2.7v2.7h-2.7zM564.0 613.3h2.8v2.8h-2.8zM549.7 606.9h2.1v2.1h-2.1zM563.1 599.5h2.8v2.8h-2.8zM547.4 613.7h1.6v1.6h-1.6zM564.8 608.9h2.4v2.4h-2.4zM549.0 599.2h2.3v2.3h-2.3zM548.2 587.7h2.1v2.1h-2.1zM563.0 603.9h2.3v2.3h-2.3zM549.6 613.8h1.8v1.8h-1.8zM565.9 613.5h2.5v2.5h-2.5zM547.9 596.7h2.7v2.7h-2.7zM549.5 598.1h2.3v2.3h-2.3zM548.2 611.8h2.8v2.8h-2.8zM562.6 588.4h1.7v1.7h-1.7zM548.4 608.6h2.0v2.0h-2.0zM547.1 613.2h2.6v2.6h-2.6zM549.8 597.1h2.4v2.4h-2.4zM549.3 591.2h2.3v2.3h-2.3zM550.1 587.7h1.5v1.5h-1.5zM562.9 600.1h2.5v2.5h-2.5zM562.6 610.4h2.5v2.5h-2.5zM550.1 595.5h1.9v1.9h-1.9zM563.4 595.5h2.9v2.9h-2.9zM549.3 592.3h2.2v2.2h-2.2zM563.2 592.0h1.6v1.6h-1.6zM550.1 609.2h1.9v1.9h-1.9zM549.5 607.4h2.9v2.9h-2.9zM565.6 610.4h1.7v1.7h-1.7zM546.8 612.8h2.4v2.4h-2.4zM565.4 601.6h1.7v1.7h-1.7zM563.9 598.2h1.5v1.5h-1.5zM562.4 613.5h2.2v2.2h-2.2zM549.1 592.0h3.0v3.0h-3.0zM547.4 606.0h2.3v2.3h-2.3zM562.8 606.4h2.4v2.4h-2.4zM549.2 595.9h2.0v2.0h-2.0zM564.2 603.2h2.0v2.0h-2.0zM563.1 608.5h2.4v2.4h-2.4zM548.9 604.3h2.2v2.2h-2.2zM548.1 614.9h3.0v3.0h-3.0zM550.3 614.5h2.9v2.9h-2.9zM549.0 598.4h1.7v1.7h-1.7z" stroke="none" fill="#5cc596"/>
<path d="M779.7 548.6h1.5v1.5h-1.5zM790.2 590.5h1.4v1.4h-1.4zM789.6 595.1h1.8v1.8h-1.8zM790.3 587.0h1.9v1.9h-1.9zM793.6 553.8h1.6v1.6h-1.6zM783.2 508.0h1.3v1.3h-1.3zM783.0 489.5h2.1v2.1h-2.1zM779.8 571.0h2.0v2.0h-2.0zM782.5 524.6h1.4v1.4h-1.4zM781.0 548.1h1.8v1.8h-1.8zM791.2 562.2h1.6v1.6h-1.6zM783.2 493.8h1.7v1.7h-1.7zM781.8 526.5h1.5v1.5h-1.5zM791.7 569.9h2.2v2.2h-2.2zM780.6 523.8h2.2v2.2h-2.2zM782.9 521.4h1.3v1.3h-1.3zM791.2 575.6h2.1v2.1h-2.1zM783.2 515.4h2.1v2.1h-2.1zM795.2 493.0h1.5v1.5h-1.5zM779.3 589.3h1.6v1.6h-1.6zM790.8 565.7h2.0v2.0h-2.0zM790.3 574.7h1.8v1.8h-1.8zM782.1 537.7h1.9v1.9h-1.9zM781.0 554.8h1.4v1.4h-1.4zM792.1 548.8h2.0v2.0h-2.0zM780.4 556.3h1.3v1.3h-1.3z" stroke="none"/>
<rect x="227.5" y="445.6" width="2" height="2" stroke="none"/>
<rect x="807.3" y="454.2" width="2.2" height="2.2" stroke="none"/>
<path d="M864 476.6 L875 476" fill="none" stroke-width="2.4"/>
<path d="M754 647 L764 641.5" fill="none" stroke-width="2.2"/>
<path d="M808.5 663 Q810 668 807.5 674" fill="none" stroke-width="2"/>
<path d="M282.8 629 L281.8 634.5" fill="none" stroke-width="3.8"/>
<path d="M275.5 645 L273 649" fill="none" stroke-width="4.6"/>
<path d="M282.3 675.5 Q280.3 681 282.8 686.5" fill="none" stroke-width="3.4"/>
<path d="M457 617 L463 624" fill="none" stroke-width="2"/>
<path d="M464 578 L466 585" fill="none" stroke-width="2.5"/>
<path d="M453 590 L453 598" fill="none" stroke-width="1.5"/>
</g>
<path d="M64.0 618.5h2.5v2.5h-2.5zM64.9 617.6h2.0v2.0h-2.0zM47.4 617.7h2.1v2.1h-2.1zM85.2 610.6h1.6v1.6h-1.6zM41.6 622.8h2.2v2.2h-2.2zM38.6 625.7h2.6v2.6h-2.6zM76.5 619.5h1.4v1.4h-1.4zM36.9 618.0h1.3v1.3h-1.3zM47.8 613.1h1.2v1.2h-1.2zM64.8 616.5h2.4v2.4h-2.4zM68.2 619.9h1.9v1.9h-1.9zM77.1 616.8h1.6v1.6h-1.6zM97.9 625.9h2.4v2.4h-2.4zM79.9 614.4h1.5v1.5h-1.5zM53.9 610.2h2.3v2.3h-2.3zM60.8 623.4h1.7v1.7h-1.7zM95.4 623.4h1.2v1.2h-1.2zM49.0 624.5h1.9v1.9h-1.9zM96.8 615.8h1.3v1.3h-1.3zM75.0 622.2h1.6v1.6h-1.6zM41.4 614.7h2.5v2.5h-2.5zM83.0 611.0h1.5v1.5h-1.5zM42.3 610.0h2.3v2.3h-2.3zM47.0 618.5h1.8v1.8h-1.8zM47.8 621.4h1.4v1.4h-1.4zM75.9 611.0h1.8v1.8h-1.8zM49.2 613.6h2.6v2.6h-2.6zM85.8 614.2h2.4v2.4h-2.4zM49.1 615.7h2.4v2.4h-2.4zM75.8 610.7h2.6v2.6h-2.6zM49.2 613.4h2.3v2.3h-2.3zM56.4 614.0h1.3v1.3h-1.3z" fill="#29313a"/>
<path d="M620.3 609.5h1.5v1.5h-1.5zM667.3 605.7h1.8v1.8h-1.8zM700.2 607.7h2.0v2.0h-2.0zM691.7 602.3h1.4v1.4h-1.4zM695.6 613.7h1.5v1.5h-1.5zM629.5 612.3h2.5v2.5h-2.5zM630.1 616.1h2.4v2.4h-2.4zM667.5 606.6h1.3v1.3h-1.3zM615.6 616.3h1.5v1.5h-1.5zM676.8 603.6h2.4v2.4h-2.4zM666.9 604.3h1.4v1.4h-1.4zM678.3 600.2h1.5v1.5h-1.5zM663.5 614.3h2.1v2.1h-2.1zM637.8 615.5h1.5v1.5h-1.5zM613.5 603.8h1.8v1.8h-1.8zM617.6 602.2h1.7v1.7h-1.7zM664.6 601.4h1.7v1.7h-1.7zM694.0 616.6h2.1v2.1h-2.1zM675.6 609.5h1.4v1.4h-1.4zM615.2 599.3h2.5v2.5h-2.5zM676.5 616.3h1.2v1.2h-1.2zM670.5 607.7h2.2v2.2h-2.2zM641.3 617.0h1.3v1.3h-1.3zM662.2 612.3h2.5v2.5h-2.5zM679.8 611.7h2.3v2.3h-2.3zM696.2 605.3h2.2v2.2h-2.2zM694.9 614.7h1.8v1.8h-1.8zM684.7 614.5h2.0v2.0h-2.0z" fill="#29313a"/>
<g id="markers">
<circle cx="522.3" cy="446.3" r="6.200" fill="#7b7b7b" stroke="#e4e4e4" stroke-width="1.300"/>
<path d="M518.800 448.200 a3.500 3.500 0 0 1 7 0z" fill="#dcdcdc"/>
<path d="M519.200 443.900l.8 1.200M522.300 442.800l0 1.400M525.400 443.900l-.8 1.200" stroke="#dcdcdc" stroke-width=".8" fill="none"/>
<circle cx="527.5" cy="441.8" r="2" fill="#f0a43a"/>
<circle cx="524.9" cy="455.500" r="6.300" fill="#52c0a2"/><rect x="518.600" y="455.500" width="12.600" height="12" fill="#52c0a2"/>
</g>
<g fill="none" stroke="#d8c03c" stroke-width="1.200" stroke-linejoin="round"><polygon points="425.4,460.4 602.8,451.5 611.7,703.7 453.3,717.3"/></g>

<g id="spheres_front">
<g transform="translate(434.4 659.3) scale(18.2 17.9) rotate(8)" clip-path="url(#uc)"><circle r="1" fill="url(#lit)"/><path d="M0-1.6H1.6V1.6H0V1A0.330 1 0 0 1 0-1Z" fill="#394566" filter="url(#sb)"/></g>
<g transform="translate(677 583.5) scale(15.2 15.2) rotate(3)" clip-path="url(#uc)"><circle r="1" fill="url(#lit)"/><path d="M0-1.6H1.6V1.6H0V1A0.050 1 0 0 1 0-1Z" fill="#394566" filter="url(#sb)"/></g>
<g transform="translate(737 625.4) scale(15.2 15.2) rotate(3)" clip-path="url(#uc)"><circle r="1" fill="url(#lit)"/><path d="M0-1.6H1.6V1.6H0V1A0.050 1 0 0 1 0-1Z" fill="#394566" filter="url(#sb)"/></g>
<g transform="translate(574.5 631.5) scale(15.5 15) rotate(3)" clip-path="url(#uc)"><circle r="1" fill="url(#lit)"/><path d="M0-1.6H1.6V1.6H0V1A0.100 1 0 0 1 0-1Z" fill="#394566" filter="url(#sb)"/></g>
</g>
</g>
<g id="navcube">
<path fill="#7e7e7e" fill-rule="evenodd" d="M1070 202.300a56 20.300 0 1 0 112 0a56 20.300 0 1 0-112 0zM1075.200 203a50.800 17.300 0 1 1 101.600 0a50.800 17.300 0 1 1-101.600 0z"/>
<polygon points="1091.900,136.200 1150.400,132.200 1159.200,154.500 1101,159" fill="#979797"/>
<polygon points="1091.900,136.200 1101,159 1101,212.900 1091.900,190.100" fill="#8a8a8a"/>
<polygon points="1101,159 1159.200,154.500 1159.600,209.400 1101,212.900" fill="#909090"/>
<text x="1131" y="188.500" font-family="Liberation Serif,serif" font-size="13" fill="#1c1c1c" text-anchor="middle" transform="rotate(-3.500 1131 184)">LEFT</text>
<text x="0" y="0" font-family="Liberation Serif,serif" font-size="6.800" fill="#1e1e1e" text-anchor="middle" transform="translate(1125.300 143.600) rotate(173) scale(1 1.250) skewX(12)">TOP</text>
<text x="0" y="0" font-family="Liberation Serif,serif" font-size="8" fill="#1c1c1c" text-anchor="middle" transform="translate(1094.800 174) rotate(70) scale(1 .5)">BACK</text>
<g font-family="Liberation Sans,sans-serif" font-size="13" font-weight="bold" fill="#141414" stroke="#8e8e8e" stroke-width=".9" paint-order="stroke" text-anchor="middle">
<text transform="translate(1057.500 208.800) rotate(-8) scale(2.350 .7) skewX(-6)">N</text>
<text transform="translate(1187 197.500) rotate(82) scale(.66 1.950)">S</text>
<text transform="translate(1136.500 226) rotate(173) scale(2.500 .74) skewX(-5)">E</text>
</g>
</g>
</svg><div class="btn" style="left:25px;width:40px;background:#3a7bb9"></div>
<svg class="abs" style="left:33px;top:75px" width="24" height="24" viewBox="0 0 24 24"><path fill="#fff" d="M12 3a9 9 0 0 0 0 18c.83 0 1.500-.67 1.500-1.500 0-.39-.15-.74-.39-1.010-.23-.26-.38-.61-.38-.99 0-.83.67-1.500 1.500-1.500H16c2.760 0 5-2.240 5-5 0-4.420-4.030-8-9-8zM6.500 12C5.670 12 5 11.330 5 10.500S5.670 9 6.500 9 8 9.670 8 10.500 7.330 12 6.500 12zm3-4C8.670 8 8 7.330 8 6.500S8.670 5 9.500 5s1.500.67 1.500 1.500S10.330 8 9.500 8zm5 0c-.83 0-1.500-.67-1.500-1.500S13.670 5 14.500 5s1.500.67 1.500 1.500S15.330 8 14.500 8zm3 4c-.83 0-1.500-.67-1.500-1.500S16.670 9 17.500 9s1.500.67 1.500 1.500-.67 1.500-1.500 1.500z"/></svg>
<div class="btn" style="left:74px;width:114px"></div>
<svg class="abs" style="left:86px;top:80px" width="14" height="14" viewBox="0 0 24 24"><path fill="#fff" d="M16 1H4c-1.100 0-2 .9-2 2v14h2V3h12V1zm-1 4H8c-1.100 0-1.990.9-1.990 2L6 21c0 1.100.89 2 1.990 2H19c1.100 0 2-.9 2-2V11l-6-6zm-1 7V6.500l5.500 5.500H14z"/></svg>
<div class="t" id="t_copy" style="left:108px;top:80px;font-size:14.5px;font-weight:bold;left:107.8px;transform-origin:0 0;transform:scaleX(0.8924)">Copy view</div>
<div class="btn" style="left:196px;width:104px"></div>
<svg class="abs" style="left:209.500px;top:82px" width="13" height="13" viewBox="0 0 24 24"><path fill="#fff" fill-rule="evenodd" d="M1 1v22h22L1 1zm4.500 10.800 6.700 6.700H5.500v-6.700z"/></svg>
<div class="t" id="t_meas" style="left:230px;top:80px;font-size:14.5px;font-weight:bold;left:229.8px;transform-origin:0 0;transform:scaleX(0.9296)">Measure</div>
<div class="btn" style="left:308px;width:141px"></div>
<svg class="abs" style="left:320px;top:80px" width="14" height="14" viewBox="0 0 24 24"><g fill="none" stroke="#fff" stroke-width="2.2"><path d="M19.500 10.500a8 8 0 1 0-9 9"/><path d="M15.800 10.800a4.200 4.200 0 1 0-5 5"/></g><path fill="#fff" d="M11.500 11.500l10 3.600-4 1.800 3.600 3.600-1.600 1.600-3.600-3.600-1.800 4z"/></svg>
<div class="t" id="t_find" style="left:343px;top:80px;font-size:14.5px;font-weight:bold;left:342.3px;transform-origin:0 0;transform:scaleX(0.8995)">Find viewpoint</div>

<div class="abs" style="left:542px;top:85px;width:296px;height:48px;background:#58c163;border-radius:4px"></div>
<svg class="abs" style="left:558px;top:98px" width="22" height="22" viewBox="0 0 22 22"><path d="M19.300 9.200a8.600 8.600 0 1 1-4.300-5.800" fill="none" stroke="#fff" stroke-width="1.700" stroke-linecap="round"/><path d="M6.800 10.400l3.400 3.400 8.600-8.800" fill="none" stroke="#fff" stroke-width="1.700" stroke-linecap="round" stroke-linejoin="round"/></svg>
<div class="t" id="t_toast" style="left:592px;top:101px;font-size:14px;font-weight:bold;left:592.0px;transform-origin:0 0;transform:scaleX(0.9005)">Point of interest created successfully</div>

<div class="btn" style="left:1215px;width:40px;background:#3a7bb9"></div>
<svg class="abs" style="left:1223px;top:75px" width="24" height="24" viewBox="0 0 24 24"><path fill="#fff" d="M10 18h4v-2h-4v2zM3 6v2h18V6H3zm3 7h12v-2H6v2z"/></svg>
<div class="btn" style="left:1215px;top:127px;width:40px;background:#7a7a7a"></div>
<svg class="abs" style="left:1215px;top:127px" width="40" height="40" viewBox="0 0 40 40"><path fill="#f4f4f8" d="M11.400 12.500H15.100L16.300 10.300H22.700L23.900 12.500H27.700a1.500 1.500 0 0 1 1.500 1.500V26.800a1.500 1.500 0 0 1-1.500 1.500H11.400a1.500 1.500 0 0 1-1.500-1.500V14a1.500 1.500 0 0 1 1.500-1.500z"/><circle cx="18.700" cy="19.500" r="4.200" fill="none" stroke="#707070" stroke-width="1.700"/><circle cx="24.700" cy="24.800" r="4.900" fill="#7a7a7a"/><circle cx="24.700" cy="24.800" r="3.500" fill="#7a7a7a" stroke="#f4f4f8" stroke-width="1"/><path d="M27.300 27.500L29.900 30" stroke="#f4f4f8" stroke-width="1.100"/></svg>

<div class="abs" style="left:1207px;top:384px;width:48px;height:336px;background:#111722"></div>
<div class="t" style="left:1224.5px;top:398px;font-size:23px;font-weight:bold;color:#6b6b6b;font-family:'Liberation Sans',sans-serif">?</div>
<svg class="abs" style="left:1221px;top:446px" width="20" height="20" viewBox="0 0 24 24"><path fill="#fff" d="M18 4V3c0-.55-.45-1-1-1H5c-.55 0-1 .45-1 1v4c0 .55.45 1 1 1h12c.55 0 1-.45 1-1V6h1v4H9v11c0 .55.45 1 1 1h2c.55 0 1-.45 1-1v-9h8V4h-3z"/></svg>
<svg class="abs" style="left:1221px;top:494px" width="20" height="20" viewBox="0 0 24 24"><path fill="#fff" d="M3 17.250V21h3.750L17.810 9.940l-3.750-3.750L3 17.250zM20.710 7.040a1 1 0 0 0 0-1.410l-2.340-2.340a1 1 0 0 0-1.410 0l-1.830 1.830 3.750 3.750 1.830-1.830z"/></svg>
<svg class="abs" style="left:1220px;top:541px" width="22" height="22" viewBox="0 0 24 24"><path fill="#fff" fill-rule="evenodd" d="M17 3H7L2 12l5 9h10l5-9-5-9zm-5 13.500a4.500 4.500 0 1 1 0-9 4.500 4.500 0 0 1 0 9z"/></svg>
<svg class="abs" style="left:1219px;top:590px" width="26" height="20" viewBox="0 0 26 20"><path fill="#fff" d="M2.600 4h19.800v4.800H15V17H10V8.800H2.600z"/><path d="M9.200 4v4.800M15.800 4v4.800" stroke="#d5d5d5" stroke-width=".8" fill="none"/></svg>
<svg class="abs" style="left:1207px;top:624px" width="48" height="48" viewBox="0 0 48 48"><path d="M22.850 16 L32.050 25.200 L22.850 34.400 L13.650 25.200 Z" fill="none" stroke="#fff" stroke-width="2.200" stroke-linejoin="round"/><path d="M13.450 25.200 H32.250 L22.850 34.600 Z" fill="#fff"/><path d="M19.400 13.100 L23.500 17.200" stroke="#fff" stroke-width="2.200"/><circle cx="32.900" cy="32.200" r="2.300" fill="#fff"/></svg>
<svg class="abs" style="left:1219px;top:684px" width="17" height="17" viewBox="0 0 24 24"><path fill="#fff" d="M18 4V3c0-.55-.45-1-1-1H5c-.55 0-1 .45-1 1v4c0 .55.45 1 1 1h12c.55 0 1-.45 1-1V6h1v4H9v11c0 .55.45 1 1 1h2c.55 0 1-.45 1-1v-9h8V4h-3z"/></svg>
<div class="abs" id="panel"></div>
<div class="abs" style="left:1270px;top:102px;width:380px;height:1.400px;background:#d3dae6"></div>
<div class="abs" style="left:1523px;top:101px;width:127px;height:4px;background:#27395e"></div>
<div class="t" id="t_comp" style="-webkit-text-stroke:.2px;left:1297px;top:73px;font-size:14.5px;color:#5d6d8e;left:1297.2px;transform-origin:0 0;transform:scaleX(0.9644)">Component</div>
<div class="t" id="t_blocks" style="-webkit-text-stroke:.2px;left:1423.5px;top:73px;font-size:14.5px;color:#5d6d8e;left:1423.6px;transform-origin:0 0;transform:scaleX(0.9598)">Blocks</div>
<div class="abs" style="left:1472.5px;top:75px;width:24.5px;height:11px;border-radius:6px;background:#4db861"></div>
<div class="t" id="t_beta" style="left:1476px;top:77.5px;font-size:6.5px;font-weight:bold;color:#fff;letter-spacing:.2px;left:1476.3px;transform-origin:0 0;transform:scaleX(0.9603)">BETA</div>
<div class="t" id="t_poi" style="left:1532.5px;top:73px;font-size:14.5px;font-weight:bold;color:#1f2d4c;left:1532.5px;transform-origin:0 0;transform:scaleX(0.9144)">Points of interest</div>
<div class="abs" style="left:1608px;top:57px;width:42px;height:44px;background:linear-gradient(90deg,rgba(255,255,255,0),rgba(255,255,255,.9) 75%,#fff)"></div>
<svg class="abs" style="left:1285px;top:122px" width="16" height="16" viewBox="0 0 24 24"><path fill="#2b3b5e" d="M20 11H7.830l5.590-5.590L12 4l-8 8 8 8 1.410-1.410L7.830 13H20v-2z"/></svg>
<div class="t" id="t_all" style="left:1310px;top:123px;font-size:14.5px;font-weight:bold;color:#2a3a5e;left:1310.3px;transform-origin:0 0;transform:scaleX(0.8624)">All Point of interests</div>
<svg class="abs" style="left:1284px;top:179px" width="20" height="20" viewBox="0 0 20 20"><path d="M13 2.500L5.500 10l7.500 7.500" fill="none" stroke="#27395e" stroke-width="2"/></svg>
<div class="t" id="t_title" style="left:1322px;top:180px;font-size:16.5px;font-weight:bold;color:#1b2641;left:1322.5px;transform-origin:0 0;transform:scaleX(0.8751)">Paint Recom...</div>
<svg class="abs" style="left:1446px;top:179px" width="20" height="20" viewBox="0 0 20 20"><path d="M7 2.500l7.500 7.500L7 17.500" fill="none" stroke="#8c8c8c" stroke-width="1.800"/></svg>
<svg class="abs" style="left:1618px;top:180px" width="8" height="20" viewBox="0 0 8 20"><g fill="#555"><circle cx="4" cy="3.300" r="1.800"/><circle cx="4" cy="9.500" r="1.800"/><circle cx="4" cy="15.700" r="1.800"/></g></svg>
<div class="abs" style="left:1270px;top:273px;width:380px;height:1px;background:#d9dde5"></div>
<div class="abs" style="left:1270px;top:270.500px;width:126.700px;height:2.500px;background:#27395e"></div>
<div class="t" id="t_over" style="left:1305px;top:241px;font-size:14px;font-weight:bold;color:#1f2d4c;left:1305.0px;transform-origin:0 0;transform:scaleX(0.9106)">Overview</div>
<div class="t" id="t_det" style="-webkit-text-stroke:.2px;left:1439px;top:241px;font-size:14px;color:#8b9cbd;left:1439.3px;transform-origin:0 0;transform:scaleX(0.9744)">Details</div>
<div class="t" id="t_com" style="-webkit-text-stroke:.2px;left:1536.500px;top:241px;font-size:14px;color:#8b9cbd;left:1536.7px;transform-origin:0 0;transform:scaleX(1.0271)">Comments/logs</div>
<div class="t" id="t_info" style="left:1294px;top:315px;font-size:16.5px;font-weight:bold;color:#1f2d4c;left:1294.4px;transform-origin:0 0;transform:scaleX(0.8882)">Information</div>
<svg class="abs" style="left:1597px;top:313.500px" width="21" height="21" viewBox="0 0 24 24"><path fill="#666" d="M3 17.250V21h3.750L17.810 9.940l-3.750-3.750L3 17.250zM20.710 7.040a1 1 0 0 0 0-1.410l-2.340-2.340a1 1 0 0 0-1.410 0l-1.830 1.830 3.750 3.750 1.830-1.830z"/></svg>
<div class="t lab" id="l0" style="top:363.8px;left:1294.4px;transform-origin:0 0;transform:scaleX(0.8802)">POI ID</div>
<div class="t val" id="v0" style="top:361.8px;transform-origin:100% 0;transform:scaleX(0.9950)">96</div>
<div class="t lab" id="l1" style="top:395.8px;left:1294.4px;transform-origin:0 0;transform:scaleX(0.9620)">Name</div>
<div class="t val" id="v1" style="top:393.8px;transform-origin:100% 0;transform:scaleX(0.9126)">Paint Recommendation</div>
<div class="t lab" id="l2" style="top:427.8px;left:1294.4px;transform-origin:0 0;transform:scaleX(0.9645)">Paint Block</div>
<div class="t val" id="v2" style="top:425.8px;transform-origin:100% 0;transform:scaleX(0.9382)">LD-7</div>
<div class="t lab" id="l3" style="top:459.8px;left:1294.4px;transform-origin:0 0;transform:scaleX(0.9542)">Parent Paint Block</div>
<div class="t val" id="v3" style="top:457.8px;transform-origin:100% 0;transform:scaleX(0.9382)">LD-7</div>
<div class="t lab" id="l4" style="top:491.8px;left:1294.4px;transform-origin:0 0;transform:scaleX(0.9686)">Component</div>
<div class="t val" id="v4" style="top:489.8px;transform-origin:100% 0;transform:scaleX(0.9897)">6-PV-0695-040-B/RMW</div>
<div class="t lab" id="l5" style="top:523.8px;left:1294.4px;transform-origin:0 0;transform:scaleX(0.9592)">Image Name</div>
<div class="t val" id="v5" style="top:521.8px;transform-origin:100% 0;transform:scaleX(0.9824)">N/A</div>
<div class="t lab" id="l6" style="top:555.8px;left:1294.4px;transform-origin:0 0;transform:scaleX(0.9151)">Due Date</div>
<div class="t val" id="v6" style="top:553.8px;transform-origin:100% 0;transform:scaleX(0.9824)">N/A</div>
<div class="t lab" id="l7" style="top:587.8px;left:1294.4px;transform-origin:0 0;transform:scaleX(0.9579)">Status</div>
<div class="t val" id="v7" style="top:585.8px;transform-origin:100% 0;transform:scaleX(0.8948)">In Review</div>
<div class="t lab" id="l8" style="top:619.8px;left:1294.4px;transform-origin:0 0;transform:scaleX(0.9635)">Workpack</div>
<div class="t val" id="v8" style="top:617.8px;transform-origin:100% 0;transform:scaleX(0.9824)">N/A</div>
<div class="t lab" id="l9" style="top:651.8px;left:1294.4px;transform-origin:0 0;transform:scaleX(0.9628)">Access Control</div>
<div class="t val" id="v9" style="top:649.8px;transform-origin:100% 0;transform:scaleX(0.9044)">Public</div>
<div class="t lab" id="l10" style="top:683.8px;left:1294.4px;transform-origin:0 0;transform:scaleX(0.9669)">Assigned To</div>
<div class="t val" id="v10" style="top:681.8px;transform-origin:100% 0;transform:scaleX(0.9057)">None</div>
<div class="t lab" id="l11" style="top:717.4px;left:1294.4px;transform-origin:0 0;transform:scaleX(0.9262)">Created By</div>
<div class="t val" id="v11" style="top:715.3px;transform-origin:100% 0;transform:scaleX(0.9031)">Muhammad Ehsan Ullah Kayani</div>
<div class="t lab" id="l12" style="top:744.4px;left:1294.4px;transform-origin:0 0;transform:scaleX(0.9766)">Comment</div>
<div class="t lab" id="l13" style="top:770.6px;left:1294.4px;transform-origin:0 0;transform:scaleX(0.9899)">Accessibility</div>
<div class="t val" id="v13" style="top:768.6px;transform-origin:100% 0;transform:scaleX(0.9097)">Not Applicable</div>
<div class="t lab" id="l14" style="top:803.1px;left:1294.4px;transform-origin:0 0;transform:scaleX(0.9317)">Date Created</div>
<div class="t val" id="v14" style="top:801.3px;transform-origin:100% 0;transform:scaleX(1.0062)">19/Mar/2026</div>
<div class="t lab" id="l15" style="top:834.6px;left:1294.4px;transform-origin:0 0;transform:scaleX(0.9468)">POI Height from Deck</div>
<div class="t val" id="v15" style="top:832.8px;transform-origin:100% 0;transform:scaleX(0.9824)">3.253 ft</div>
<div class="t lab" id="l16" style="top:866.8px;left:1294.4px;transform-origin:0 0;transform:scaleX(0.9661)">POI Height from Viewpoint</div>
<div class="t val" id="v16" style="top:865.0px;transform-origin:100% 0;transform:scaleX(0.9782)">N/A</div>
<div class="t lab" id="l17" style="top:899.0px;left:1294.4px;transform-origin:0 0;transform:scaleX(0.9489)">Location in 3D</div>
<svg class="abs" style="left:1404.500px;top:709.500px" width="25.500" height="25.500" viewBox="0 0 26 26"><circle cx="13" cy="13" r="12.800" fill="#050505"/><g fill="none" stroke="#7a7a7a" stroke-width="2.200"><path d="M13 13.500L13 21.500M13 13.500L6.200 8.200M13 13.500L19.800 8.200"/></g><g fill="none" stroke="#b4b4b4" stroke-width=".7"><path d="M13 13L13 21.500M13 13L6.200 8M13 13L19.800 8"/></g></svg>
<div class="abs" style="left:1496px;top:893px;width:130px;height:26px;border-radius:4px;background:#283c62"></div>
<svg class="abs" style="left:1502px;top:898px" width="16" height="16" viewBox="0 0 16 16"><g fill="none" stroke="#fff" stroke-width="1.600"><path d="M1.300 5V2.800a1.500 1.500 0 0 1 1.500-1.500H5M11 1.300h2.200a1.500 1.500 0 0 1 1.500 1.500V5M14.700 11v2.200a1.500 1.500 0 0 1-1.500 1.500H11M5 14.700H2.800a1.500 1.500 0 0 1-1.500-1.500V11"/></g><circle cx="8" cy="8" r="2.200" fill="#fff"/></svg>
<div class="t" id="t_upd" style="left:1525.500px;top:900px;font-size:13px;font-weight:bold;color:#fff;left:1525.6px;transform-origin:0 0;transform:scaleX(0.9318)">Update Location</div>
<div class="abs" style="left:1294px;top:935px;width:332px;height:1px;background:#d5d9e1"></div>
<div class="t" id="t_link" style="left:1294px;top:955px;font-size:16.500px;font-weight:bold;color:#1b2641;left:1294.4px;transform-origin:0 0;transform:scaleX(0.8651)">Linked POIs</div></body></html>
